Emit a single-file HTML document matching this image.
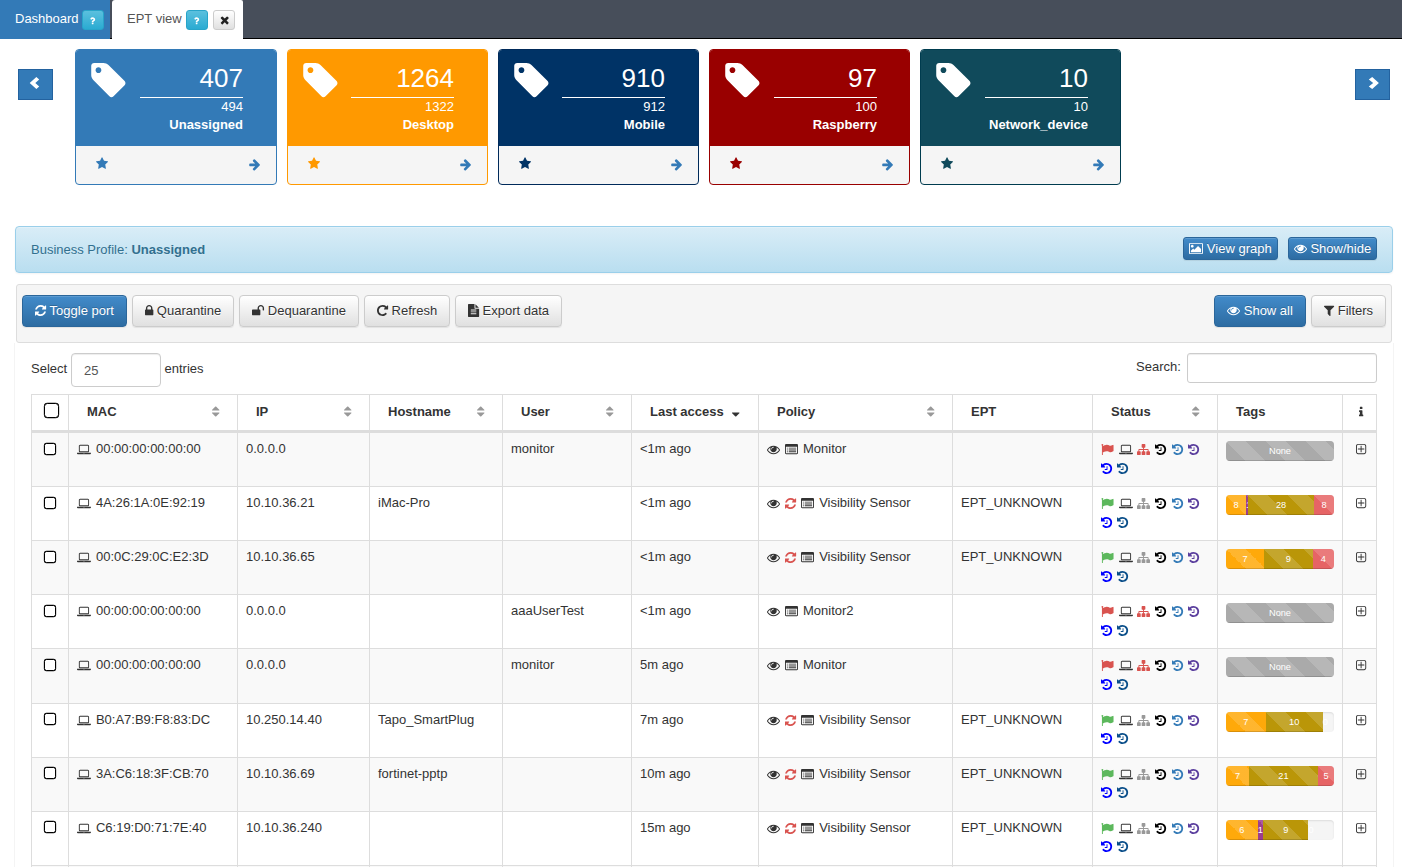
<!DOCTYPE html><html><head><meta charset="utf-8"><title>EPT view</title><style>
*{box-sizing:border-box}
html,body{margin:0;padding:0}
body{width:1402px;height:867px;overflow:hidden;background:#fff;font-family:"Liberation Sans",Arial,sans-serif;font-size:13px;line-height:1.42857;color:#333;position:relative}
svg.fa{display:inline-block;overflow:visible}
.abs{position:absolute}
#tabbar{position:absolute;left:0;top:0;width:1402px;height:39px;background:#474e5a;border-bottom:1px solid #000}
.tab{position:absolute;top:0;height:38px;font-size:13px;line-height:18px;white-space:nowrap}
#tab1{left:0;width:110px;background:#337ab7;color:#fff;height:39px}
#tab2{left:112px;width:131px;background:#fff;color:#555;height:39px;border-radius:3px 2px 0 0}
.tab .t{position:absolute;top:10px}
.xs{position:absolute;top:10px;height:20px;border-radius:3px;border:1px solid}
.xs.info{background:linear-gradient(#5bc0de,#2aabd2);border-color:#28a4c9}
.xs.def{background:linear-gradient(#fff,#e0e0e0);border-color:#ccc}
.nav{position:absolute;top:69px;width:35px;height:31px;background:#337ab7;border:1px solid #23629f}
.card{position:absolute;top:49px;height:136px;border:1px solid;border-radius:4px;background:#f5f5f5;overflow:hidden}
.card .hd{position:absolute;left:0;top:0;right:0;height:96px;color:#fff}
.card .big{position:absolute;right:var(--r);top:10px;font-size:26px;line-height:37px}
.card .hr{position:absolute;right:var(--r);width:103px;top:47px;height:1px;background:#fff}
.card .sm{position:absolute;right:var(--r);top:47.5px;line-height:18.57px}
.card .nm{position:absolute;right:var(--r);top:65.5px;line-height:18.57px;font-weight:bold;white-space:nowrap}
.card .star{position:absolute;left:20px;top:105px;line-height:18.57px}
.card .arr{position:absolute;right:15.8px;top:105.7px;line-height:18.57px}
#alert{position:absolute;left:15px;top:226px;width:1378px;height:47px;border:1px solid #9acfea;border-radius:4px;background:linear-gradient(#d9edf7,#b9def0);color:#31708f;text-shadow:0 1px 0 rgba(255,255,255,.2);box-shadow:inset 0 1px 0 rgba(255,255,255,.25),0 1px 2px rgba(0,0,0,.05)}
#alert .txt{position:absolute;left:15px;top:14px;line-height:18.57px}
.btn{position:absolute;border:1px solid;border-radius:4px;white-space:nowrap;text-align:center;font-size:13px}
.btn.p{background:linear-gradient(#428bca,#2d6ca2);border-color:#2b669a;color:#fff;text-shadow:0 -1px 0 rgba(0,0,0,.2);box-shadow:inset 0 1px 0 rgba(255,255,255,.15),0 1px 1px rgba(0,0,0,.075)}
.btn.d{background:linear-gradient(#fff,#e0e0e0);border-color:#ccc;color:#333;text-shadow:0 1px 0 #fff;box-shadow:inset 0 1px 0 rgba(255,255,255,.15),0 1px 1px rgba(0,0,0,.075)}
.btn.xsb{height:23px;line-height:21px;border-radius:3px}
.btn.md{height:32px;line-height:29px}
#well{position:absolute;left:16px;top:284px;width:1376px;height:59px;background:#f5f5f5;border:1px solid #ddd;border-radius:3px}
.inp{position:absolute;border:1px solid #ccc;border-radius:4px;background:#fff;box-shadow:inset 0 1px 1px rgba(0,0,0,.075)}
table{position:absolute;left:31px;top:394px;width:1346px;border-collapse:separate;border-spacing:0;table-layout:fixed}
th,td{border:0 solid #ddd;border-top-width:1px;border-left-width:1px;padding:8px;vertical-align:top;text-align:left;white-space:nowrap;overflow:hidden;line-height:18.5px}
th:last-child,td:last-child{border-right-width:1px}
th{font-weight:bold;padding:8px 18px;height:38px;border-bottom-width:2px;position:relative}
tbody tr{height:54px}
td{padding-top:7px}
tr.hi .cb{margin-top:2px}
tbody tr:nth-child(odd){background:#f9f9f9}
td.st{white-space:nowrap;padding-left:7.5px}
.l2{position:relative;top:1px}
tr.hi .l2{top:0}
td.st svg{margin-right:5px}
td svg{margin-right:5px}
td.c{text-align:center;padding-left:2.5px;padding-right:0}
td.k{padding:7px 8px 8px}th.k{padding:8px}
td.c svg{margin:0}
.cb{display:block;width:12px;height:12px;border:1px solid #000;border-radius:2.5px;background:#fff;margin:3px 0 0 4px;box-shadow:0 0 0 .15px #000}
th .cb{width:15px;height:15px;border-radius:3.5px;margin:0 0 0 4px}
.srt{position:absolute;right:18px;top:8px}
.pg{margin-top:1px;width:108px;height:20px;border-radius:4px;overflow:hidden;background:#f5f5f5;box-shadow:inset 0 1px 2px rgba(0,0,0,.1);white-space:nowrap;font-size:0}
.pg span{display:inline-block;height:20px;font-size:9.2px;line-height:20px;color:#fff;text-align:center;vertical-align:top;overflow:visible;white-space:nowrap;box-shadow:inset 0 -1px 0 rgba(0,0,0,.15);background-image:linear-gradient(45deg,rgba(255,255,255,.15) 25%,transparent 25%,transparent 50%,rgba(255,255,255,.15) 50%,rgba(255,255,255,.15) 75%,transparent 75%,transparent);background-size:40px 40px}
</style></head><body>
<div id="tabbar">
<div class="tab" id="tab1"><span class="t" style="left:15px">Dashboard</span><span class="xs info" style="left:82px;width:22px"><span class="abs" style="left:7.2px;top:4.6px;line-height:0"><svg class="fa" viewBox="46 0 1024 1792" style="width:5.43px;height:9.5px;vertical-align:-2.26px;fill:#fff;vertical-align:top"><path d="M704 1256v240q0 16-12 28t-28 12h-240q-16 0-28-12t-12-28v-240q0-16 12-28t28-12h240q16 0 28 12t12 28zM1020 656q0 54-15.500 101t-35 76.500-55 59.500-57.500 43.500-61 35.500q-41 23-68.500 65t-27.500 67q0 17-12 32.500t-28 15.500h-240q-15 0-25.500-18.500t-10.500-37.500v-45q0-83 65-156.500t143-108.500q59-27 84-56t25-76q0-42-46.500-74t-107.500-32q-65 0-108 29-35 25-107 115-13 16-31 16-12 0-25-8l-164-125q-13-10-15.500-25t5.500-28q160-266 464-266 80 0 161 31t146 83 106 127.500 41 158.500z"/></svg></span></span></div>
<div class="tab" id="tab2"><span class="t" style="left:15px">EPT view</span><span class="xs info" style="left:74px;width:22px"><span class="abs" style="left:7.2px;top:4.6px;line-height:0"><svg class="fa" viewBox="46 0 1024 1792" style="width:5.43px;height:9.5px;vertical-align:-2.26px;fill:#fff;vertical-align:top"><path d="M704 1256v240q0 16-12 28t-28 12h-240q-16 0-28-12t-12-28v-240q0-16 12-28t28-12h240q16 0 28 12t12 28zM1020 656q0 54-15.500 101t-35 76.500-55 59.500-57.500 43.500-61 35.500q-41 23-68.500 65t-27.500 67q0 17-12 32.500t-28 15.500h-240q-15 0-25.500-18.500t-10.500-37.500v-45q0-83 65-156.500t143-108.500q59-27 84-56t25-76q0-42-46.500-74t-107.500-32q-65 0-108 29-35 25-107 115-13 16-31 16-12 0-25-8l-164-125q-13-10-15.500-25t5.500-28q160-266 464-266 80 0 161 31t146 83 106 127.500 41 158.500z"/></svg></span></span><span class="xs def" style="left:101px;width:22px"><span class="abs" style="left:5.6px;top:2.5px;line-height:0"><svg class="fa" viewBox="192 0 1408 1792" style="width:9.43px;height:12px;vertical-align:-2.61px;fill:#222;vertical-align:top"><path d="M1490 1322q0 40-28 68l-136 136q-28 28-68 28t-68-28l-294-294-294 294q-28 28-68 28t-68-28l-136-136q-28-28-28-68t28-68l294-294-294-294q-28-28-28-68t28-68l136-136q28-28 68-28t68 28l294 294 294-294q28-28 68-28t68 28l136 136q28 28 28 68t-28 68l-294 294 294 294q28 28 28 68z"/></svg></span></span></div>
</div>
<div class="nav" style="left:18px"><svg class="abs" style="left:-1px;top:-1px" width="35" height="31" viewBox="18 69 35 31"><polygon fill="#fff" points="29.7,83 36.35,76.9 39.2,79.5 35.3,83 39.2,86.5 36.35,89.1"/></svg></div>
<div class="nav" style="left:1355px"><svg class="abs" style="left:-1px;top:-1px" width="35" height="31" viewBox="1355 69 35 31"><polygon fill="#fff" points="1378.9,83 1372.2,76.9 1368.8,79.6 1373.2,83 1368.8,86.6 1372.2,89.1"/></svg></div>
<div class="card" style="left:75px;width:202px;border-color:#337ab7;--r:33px">
<div class="hd" style="background:#337ab7"><span class="abs" style="left:15px;top:9.9px;line-height:0"><svg class="fa" viewBox="118 0 1536 1792" style="width:34.71px;height:40.5px;vertical-align:-6.69px;fill:#fff;vertical-align:top"><path d="M576 448q0-53-37.5-90.5t-90.5-37.5-90.5 37.5-37.5 90.5 37.5 90.5 90.5 37.5 90.5-37.5 37.5-90.5zM1643 1024q0 53-37 90l-491 492q-39 37-91 37-53 0-90-37l-715-716q-38-37-64.5-101t-26.5-117v-416q0-52 38-90t90-38h416q53 0 117 26.5t102 64.5l715 714q37 39 37 91z"/></svg></span>
<div class="big">407</div><div class="hr"></div><div class="sm">494</div><div class="nm">Unassigned</div></div>
<div class="star"><svg class="fa" viewBox="64 0 1664 1792" style="width:12.07px;height:13px;vertical-align:-1.86px;fill:#337ab7;"><path d="M1728 647q0 22-26 48l-363 354 86 500q1 7 1 20 0 21-10.5 35.5t-30.5 14.5q-19 0-40-12l-449-236-449 236q-22 12-40 12-21 0-31.5-14.5t-10.5-35.5q0-6 2-20l86-500-364-354q-25-27-25-48 0-37 56-46l502-73 225-455q19-41 49-41t49 41l225 455 502 73q56 9 56 46z"/></svg></div><div class="arr"><svg class="fa" viewBox="96 0 1536 1792" style="width:11.14px;height:13px;vertical-align:-1.86px;fill:#337ab7;"><path d="M1600 960q0 54-37 91l-651 651q-39 37-91 37-51 0-90-37l-75-75q-38-38-38-91t38-91l293-293h-704q-52 0-84.5-37.5t-32.5-90.5v-128q0-53 32.5-90.5t84.5-37.5h704l-293-294q-38-36-38-90t38-90l75-75q38-38 90-38 53 0 91 38l651 651q37 35 37 90z"/></svg></div></div>
<div class="card" style="left:287px;width:201px;border-color:#ff9900;--r:33px">
<div class="hd" style="background:#ff9900"><span class="abs" style="left:15px;top:9.9px;line-height:0"><svg class="fa" viewBox="118 0 1536 1792" style="width:34.71px;height:40.5px;vertical-align:-6.69px;fill:#fff;vertical-align:top"><path d="M576 448q0-53-37.5-90.5t-90.5-37.5-90.5 37.5-37.5 90.5 37.5 90.5 90.5 37.5 90.5-37.5 37.5-90.5zM1643 1024q0 53-37 90l-491 492q-39 37-91 37-53 0-90-37l-715-716q-38-37-64.5-101t-26.5-117v-416q0-52 38-90t90-38h416q53 0 117 26.5t102 64.5l715 714q37 39 37 91z"/></svg></span>
<div class="big">1264</div><div class="hr"></div><div class="sm">1322</div><div class="nm">Desktop</div></div>
<div class="star"><svg class="fa" viewBox="64 0 1664 1792" style="width:12.07px;height:13px;vertical-align:-1.86px;fill:#ff9900;"><path d="M1728 647q0 22-26 48l-363 354 86 500q1 7 1 20 0 21-10.5 35.5t-30.5 14.5q-19 0-40-12l-449-236-449 236q-22 12-40 12-21 0-31.5-14.5t-10.5-35.5q0-6 2-20l86-500-364-354q-25-27-25-48 0-37 56-46l502-73 225-455q19-41 49-41t49 41l225 455 502 73q56 9 56 46z"/></svg></div><div class="arr"><svg class="fa" viewBox="96 0 1536 1792" style="width:11.14px;height:13px;vertical-align:-1.86px;fill:#337ab7;"><path d="M1600 960q0 54-37 91l-651 651q-39 37-91 37-51 0-90-37l-75-75q-38-38-38-91t38-91l293-293h-704q-52 0-84.5-37.5t-32.5-90.5v-128q0-53 32.5-90.5t84.5-37.5h704l-293-294q-38-36-38-90t38-90l75-75q38-38 90-38 53 0 91 38l651 651q37 35 37 90z"/></svg></div></div>
<div class="card" style="left:498px;width:201px;border-color:#002a5a;--r:33px">
<div class="hd" style="background:#003366"><span class="abs" style="left:15px;top:9.9px;line-height:0"><svg class="fa" viewBox="118 0 1536 1792" style="width:34.71px;height:40.5px;vertical-align:-6.69px;fill:#fff;vertical-align:top"><path d="M576 448q0-53-37.5-90.5t-90.5-37.5-90.5 37.5-37.5 90.5 37.5 90.5 90.5 37.5 90.5-37.5 37.5-90.5zM1643 1024q0 53-37 90l-491 492q-39 37-91 37-53 0-90-37l-715-716q-38-37-64.5-101t-26.5-117v-416q0-52 38-90t90-38h416q53 0 117 26.5t102 64.5l715 714q37 39 37 91z"/></svg></span>
<div class="big">910</div><div class="hr"></div><div class="sm">912</div><div class="nm">Mobile</div></div>
<div class="star"><svg class="fa" viewBox="64 0 1664 1792" style="width:12.07px;height:13px;vertical-align:-1.86px;fill:#003366;"><path d="M1728 647q0 22-26 48l-363 354 86 500q1 7 1 20 0 21-10.5 35.5t-30.5 14.5q-19 0-40-12l-449-236-449 236q-22 12-40 12-21 0-31.5-14.5t-10.5-35.5q0-6 2-20l86-500-364-354q-25-27-25-48 0-37 56-46l502-73 225-455q19-41 49-41t49 41l225 455 502 73q56 9 56 46z"/></svg></div><div class="arr"><svg class="fa" viewBox="96 0 1536 1792" style="width:11.14px;height:13px;vertical-align:-1.86px;fill:#337ab7;"><path d="M1600 960q0 54-37 91l-651 651q-39 37-91 37-51 0-90-37l-75-75q-38-38-38-91t38-91l293-293h-704q-52 0-84.5-37.5t-32.5-90.5v-128q0-53 32.5-90.5t84.5-37.5h704l-293-294q-38-36-38-90t38-90l75-75q38-38 90-38 53 0 91 38l651 651q37 35 37 90z"/></svg></div></div>
<div class="card" style="left:709px;width:201px;border-color:#990000;--r:32px">
<div class="hd" style="background:#990000"><span class="abs" style="left:15px;top:9.9px;line-height:0"><svg class="fa" viewBox="118 0 1536 1792" style="width:34.71px;height:40.5px;vertical-align:-6.69px;fill:#fff;vertical-align:top"><path d="M576 448q0-53-37.5-90.5t-90.5-37.5-90.5 37.5-37.5 90.5 37.5 90.5 90.5 37.5 90.5-37.5 37.5-90.5zM1643 1024q0 53-37 90l-491 492q-39 37-91 37-53 0-90-37l-715-716q-38-37-64.5-101t-26.5-117v-416q0-52 38-90t90-38h416q53 0 117 26.5t102 64.5l715 714q37 39 37 91z"/></svg></span>
<div class="big">97</div><div class="hr"></div><div class="sm">100</div><div class="nm">Raspberry</div></div>
<div class="star"><svg class="fa" viewBox="64 0 1664 1792" style="width:12.07px;height:13px;vertical-align:-1.86px;fill:#990000;"><path d="M1728 647q0 22-26 48l-363 354 86 500q1 7 1 20 0 21-10.5 35.5t-30.5 14.5q-19 0-40-12l-449-236-449 236q-22 12-40 12-21 0-31.5-14.5t-10.5-35.5q0-6 2-20l86-500-364-354q-25-27-25-48 0-37 56-46l502-73 225-455q19-41 49-41t49 41l225 455 502 73q56 9 56 46z"/></svg></div><div class="arr"><svg class="fa" viewBox="96 0 1536 1792" style="width:11.14px;height:13px;vertical-align:-1.86px;fill:#337ab7;"><path d="M1600 960q0 54-37 91l-651 651q-39 37-91 37-51 0-90-37l-75-75q-38-38-38-91t38-91l293-293h-704q-52 0-84.5-37.5t-32.5-90.5v-128q0-53 32.5-90.5t84.5-37.5h704l-293-294q-38-36-38-90t38-90l75-75q38-38 90-38 53 0 91 38l651 651q37 35 37 90z"/></svg></div></div>
<div class="card" style="left:920px;width:201px;border-color:#003c4f;--r:32px">
<div class="hd" style="background:#104a5b"><span class="abs" style="left:15px;top:9.9px;line-height:0"><svg class="fa" viewBox="118 0 1536 1792" style="width:34.71px;height:40.5px;vertical-align:-6.69px;fill:#fff;vertical-align:top"><path d="M576 448q0-53-37.5-90.5t-90.5-37.5-90.5 37.5-37.5 90.5 37.5 90.5 90.5 37.5 90.5-37.5 37.5-90.5zM1643 1024q0 53-37 90l-491 492q-39 37-91 37-53 0-90-37l-715-716q-38-37-64.5-101t-26.5-117v-416q0-52 38-90t90-38h416q53 0 117 26.5t102 64.5l715 714q37 39 37 91z"/></svg></span>
<div class="big">10</div><div class="hr"></div><div class="sm">10</div><div class="nm">Network_device</div></div>
<div class="star"><svg class="fa" viewBox="64 0 1664 1792" style="width:12.07px;height:13px;vertical-align:-1.86px;fill:#104a5b;"><path d="M1728 647q0 22-26 48l-363 354 86 500q1 7 1 20 0 21-10.5 35.5t-30.5 14.5q-19 0-40-12l-449-236-449 236q-22 12-40 12-21 0-31.5-14.5t-10.5-35.5q0-6 2-20l86-500-364-354q-25-27-25-48 0-37 56-46l502-73 225-455q19-41 49-41t49 41l225 455 502 73q56 9 56 46z"/></svg></div><div class="arr"><svg class="fa" viewBox="96 0 1536 1792" style="width:11.14px;height:13px;vertical-align:-1.86px;fill:#337ab7;"><path d="M1600 960q0 54-37 91l-651 651q-39 37-91 37-51 0-90-37l-75-75q-38-38-38-91t38-91l293-293h-704q-52 0-84.5-37.5t-32.5-90.5v-128q0-53 32.5-90.5t84.5-37.5h704l-293-294q-38-36-38-90t38-90l75-75q38-38 90-38 53 0 91 38l651 651q37 35 37 90z"/></svg></div></div>
<div id="alert"><div class="txt">Business Profile: <b>Unassigned</b></div>
<div class="btn p xsb" style="left:1167px;top:10px;width:95px"><svg class="fa" viewBox="0 0 1920 1792" style="width:13.93px;height:13px;vertical-align:-2.26px;fill:#fff;"><path d="M640 576q0 80-56 136t-136 56-136-56-56-136 56-136 136-56 136 56 56 136zM1664 960v448h-1408v-192l320-320 160 160 512-512zM1760 256h-1600q-13 0-22.5 9.5t-9.5 22.5v1216q0 13 9.5 22.5t22.5 9.5h1600q13 0 22.5-9.5t9.5-22.5v-1216q0-13-9.5-22.5t-22.5-9.5zM1920 288v1216q0 66-47 113t-113 47h-1600q-66 0-113-47t-47-113v-1216q0-66 47-113t113-47h1600q66 0 113 47t47 113z"/></svg> View graph</div>
<div class="btn p xsb" style="left:1272px;top:10px;width:89px"><svg class="fa" viewBox="0 0 1792 1792" style="width:13.00px;height:13px;vertical-align:-2.26px;fill:#fff;"><path d="M1664 960q-152-236-381-353 61 104 61 225 0 185-131.5 316.5t-316.5 131.5-316.5-131.5-131.5-316.5q0-121 61-225-229 117-381 353 133 205 333.5 326.5t434.5 121.5 434.5-121.5 333.5-326.5zM944 576q0-20-14-34t-34-14q-125 0-214.5 89.5t-89.5 214.5q0 20 14 34t34 14 34-14 14-34q0-86 61-147t147-61q20 0 34-14t14-34zM1792 960q0 34-20 69-140 230-376.5 368.5t-499.5 138.5-499.5-139-376.500-368q-20-35-20-69t20-69q140-229 376.5-368t499.5-139 499.5 139 376.5 368q20 35 20 69z"/></svg> Show/hide</div></div>
<div id="well">
<div class="btn p md" style="left:5px;top:10px;width:105px"><svg class="fa" viewBox="128 0 1536 1792" style="width:11.14px;height:13px;vertical-align:-1.86px;fill:#fff;"><path d="M1639 1056q0 5-1 7-64 268-268 434.5t-478 166.5q-146 0-282.5-55t-243.5-157l-129 129q-19 19-45 19t-45-19-19-45v-448q0-26 19-45t45-19h448q26 0 45 19t19 45-19 45l-137 137q71 66 161 102t187 36q134 0 250-65t186-179q11-17 53-117 8-23 30-23h192q13 0 22.5 9.5t9.500 22.5zM1664 256v448q0 26-19 45t-45 19h-448q-26 0-45-19t-19-45 19-45l138-138q-148-137-349-137-134 0-250 65t-186 179q-11 17-53 117-8 23-30 23h-199q-13 0-22.5-9.5t-9.5-22.5v-7q65-268 270-434.5t480-166.5q146 0 284 55.5t245 156.5l130-129q19-19 45-19t45 19 19 45z"/></svg> Toggle port</div>
<div class="btn d md" style="left:115px;top:10px;width:102px"><svg class="fa" viewBox="320 0 1152 1792" style="width:8.36px;height:13px;vertical-align:-1.86px;fill:#333;"><path d="M640 768h512v-192q0-106-75-181t-181-75-181 75-75 181v192zM1472 864v576q0 40-28 68t-68 28h-960q-40 0-68-28t-28-68v-576q0-40 28-68t68-28h32v-192q0-184 132-316t316-132 316 132 132 316v192h32q40 0 68 28t28 68z"/></svg> Quarantine</div>
<div class="btn d md" style="left:222px;top:10px;width:120px"><svg class="fa" viewBox="64 0 1664 1792" style="width:12.07px;height:13px;vertical-align:-1.86px;fill:#333;"><path d="M1728 576v256q0 26-19 45t-45 19h-64q-26 0-45-19t-19-45v-256q0-106-75-181t-181-75-181 75-75 181v192h96q40 0 68 28t28 68v576q0 40-28 68t-68 28h-960q-40 0-68-28t-28-68v-576q0-40 28-68t68-28h672v-192q0-185 131.5-316.5t316.5-131.5 316.5 131.5 131.5 316.5z"/></svg> Dequarantine</div>
<div class="btn d md" style="left:347px;top:10px;width:86px"><svg class="fa" viewBox="128 0 1536 1792" style="width:11.14px;height:13px;vertical-align:-1.86px;fill:#333;"><path d="M1664 256v448q0 26-19 45t-45 19h-448q-42 0-59-40-17-39 14-69l138-138q-148-137-349-137-104 0-198.5 40.5t-163.5 109.5-109.5 163.5-40.5 198.5 40.5 198.5 109.5 163.5 163.5 109.5 198.5 40.5q119 0 225-52t179-147q7-10 23-12 15 0 25 9l137 138q9 8 9.500 20.5t-7.500 22.5q-109 132-264 204.5t-327 72.5q-156 0-298-61t-245-164-164-245-61-298 61-298 164-245 245-164 298-61q147 0 284.5 55.5t244.5 156.5l130-129q29-31 70-14 39 17 39 59z"/></svg> Refresh</div>
<div class="btn d md" style="left:438px;top:10px;width:107px"><svg class="fa" viewBox="128 0 1536 1792" style="width:11.14px;height:13px;vertical-align:-1.86px;fill:#333;"><path d="M1596 476q14 14 28 36h-472v-472q22 14 36 28zM1120 640h544v1056q0 40-28 68t-68 28h-1344q-40 0-68-28t-28-68v-1600q0-40 28-68t68-28h800v544q0 40 28 68t68 28zM1280 1376v-64q0-14-9-23t-23-9h-704q-14 0-23 9t-9 23v64q0 14 9 23t23 9h704q14 0 23-9t9-23zM1280 1120v-64q0-14-9-23t-23-9h-704q-14 0-23 9t-9 23v64q0 14 9 23t23 9h704q14 0 23-9t9-23zM1280 864v-64q0-14-9-23t-23-9h-704q-14 0-23 9t-9 23v64q0 14 9 23t23 9h704q14 0 23-9t9-23z"/></svg> Export data</div>
<div class="btn p md" style="left:1197px;top:10px;width:92px"><svg class="fa" viewBox="0 0 1792 1792" style="width:13.00px;height:13px;vertical-align:-1.86px;fill:#fff;"><path d="M1664 960q-152-236-381-353 61 104 61 225 0 185-131.5 316.5t-316.5 131.5-316.5-131.5-131.5-316.5q0-121 61-225-229 117-381 353 133 205 333.5 326.5t434.5 121.5 434.5-121.5 333.5-326.5zM944 576q0-20-14-34t-34-14q-125 0-214.5 89.5t-89.5 214.5q0 20 14 34t34 14 34-14 14-34q0-86 61-147t147-61q20 0 34-14t14-34zM1792 960q0 34-20 69-140 230-376.5 368.5t-499.5 138.5-499.5-139-376.500-368q-20-35-20-69t20-69q140-229 376.5-368t499.5-139 499.5 139 376.5 368q20 35 20 69z"/></svg> Show all</div>
<div class="btn d md" style="left:1294px;top:10px;width:75px"><svg class="fa" viewBox="192 0 1408 1792" style="width:10.21px;height:13px;vertical-align:-1.86px;fill:#333;"><path d="M1595 295q17 41-14 70l-493 493v742q0 42-39 59-13 5-25 5-27 0-45-19l-256-256q-19-19-19-45v-486l-493-493q-31-29-14-70 17-39 59-39h1280q42 0 59 39z"/></svg> Filters</div>
</div>
<div class="abs" style="left:14px;top:343px;width:1px;height:524px;background:#f4f4f4"></div>
<div class="abs" style="left:1393px;top:343px;width:1px;height:524px;background:#f4f4f4"></div>
<div class="abs" style="left:31px;top:360px;line-height:18.57px">Select</div>
<div class="inp" style="left:71px;top:353px;width:90px;height:34px"><span class="abs" style="left:12px;top:8px;line-height:18.57px;color:#555">25</span></div>
<div class="abs" style="left:164.5px;top:360px;line-height:18.57px">entries</div>
<div class="abs" style="left:1136px;top:358px;line-height:18.57px">Search:</div>
<div class="inp" style="left:1187px;top:353px;width:190px;height:30px;border-radius:3px"></div>
<table><colgroup><col style="width:37px"><col style="width:169px"><col style="width:132px"><col style="width:133px"><col style="width:129px"><col style="width:127px"><col style="width:194px"><col style="width:140px"><col style="width:125px"><col style="width:125px"><col style="width:35px"></colgroup>
<thead><tr><th class="k"><span class="cb"></span></th><th>MAC<span class="srt"><svg class="fa" viewBox="0 0 1024 1792" style="width:7.43px;height:13px;vertical-align:-1.86px;fill:#999;"><path d="M1024 1088q0 26-19 45l-448 448q-19 19-45 19t-45-19l-448-448q-19-19-19-45t19-45 45-19h896q26 0 45 19t19 45zM1024 704q0 26-19 45t-45 19h-896q-26 0-45-19t-19-45 19-45l448-448q19-19 45-19t45 19l448 448q19 19 19 45z"/></svg></span></th><th>IP<span class="srt"><svg class="fa" viewBox="0 0 1024 1792" style="width:7.43px;height:13px;vertical-align:-1.86px;fill:#999;"><path d="M1024 1088q0 26-19 45l-448 448q-19 19-45 19t-45-19l-448-448q-19-19-19-45t19-45 45-19h896q26 0 45 19t19 45zM1024 704q0 26-19 45t-45 19h-896q-26 0-45-19t-19-45 19-45l448-448q19-19 45-19t45 19l448 448q19 19 19 45z"/></svg></span></th><th>Hostname<span class="srt"><svg class="fa" viewBox="0 0 1024 1792" style="width:7.43px;height:13px;vertical-align:-1.86px;fill:#999;"><path d="M1024 1088q0 26-19 45l-448 448q-19 19-45 19t-45-19l-448-448q-19-19-19-45t19-45 45-19h896q26 0 45 19t19 45zM1024 704q0 26-19 45t-45 19h-896q-26 0-45-19t-19-45 19-45l448-448q19-19 45-19t45 19l448 448q19 19 19 45z"/></svg></span></th><th>User<span class="srt"><svg class="fa" viewBox="0 0 1024 1792" style="width:7.43px;height:13px;vertical-align:-1.86px;fill:#999;"><path d="M1024 1088q0 26-19 45l-448 448q-19 19-45 19t-45-19l-448-448q-19-19-19-45t19-45 45-19h896q26 0 45 19t19 45zM1024 704q0 26-19 45t-45 19h-896q-26 0-45-19t-19-45 19-45l448-448q19-19 45-19t45 19l448 448q19 19 19 45z"/></svg></span></th><th>Last access <span style="margin-left:5px"><svg class="fa" viewBox="0 0 1024 1792" style="width:7.43px;height:13px;vertical-align:-1.86px;fill:#333;"><path d="M1024 1088q0 26-19 45l-448 448q-19 19-45 19t-45-19l-448-448q-19-19-19-45t19-45 45-19h896q26 0 45 19t19 45z"/></svg></span></th><th>Policy<span class="srt"><svg class="fa" viewBox="0 0 1024 1792" style="width:7.43px;height:13px;vertical-align:-1.86px;fill:#999;"><path d="M1024 1088q0 26-19 45l-448 448q-19 19-45 19t-45-19l-448-448q-19-19-19-45t19-45 45-19h896q26 0 45 19t19 45zM1024 704q0 26-19 45t-45 19h-896q-26 0-45-19t-19-45 19-45l448-448q19-19 45-19t45 19l448 448q19 19 19 45z"/></svg></span></th><th>EPT</th><th>Status<span class="srt"><svg class="fa" viewBox="0 0 1024 1792" style="width:7.43px;height:13px;vertical-align:-1.86px;fill:#999;"><path d="M1024 1088q0 26-19 45l-448 448q-19 19-45 19t-45-19l-448-448q-19-19-19-45t19-45 45-19h896q26 0 45 19t19 45zM1024 704q0 26-19 45t-45 19h-896q-26 0-45-19t-19-45 19-45l448-448q19-19 45-19t45 19l448 448q19 19 19 45z"/></svg></span></th><th>Tags</th><th style="padding:8px 0 8px 4px;text-align:center"><svg class="fa" viewBox="0 0 640 1792" style="width:4.29px;height:12px;vertical-align:-1.71px;fill:#333;"><path d="M640 1344v128q0 26-19 45t-45 19h-512q-26 0-45-19t-19-45v-128q0-26 19-45t45-19h64v-384h-64q-26 0-45-19t-19-45v-128q0-26 19-45t45-19h384q26 0 45 19t19 45v576h64q26 0 45 19t19 45zM512 192v192q0 26-19 45t-45 19h-256q-26 0-45-19t-19-45v-192q0-26 19-45t45-19h256q26 0 45 19t19 45z"/></svg></th></tr></thead>
<tbody>
<tr><td class="k"><span class="cb"></span></td><td><svg class="fa" viewBox="0 0 1920 1792" style="width:13.93px;height:13px;vertical-align:-2.76px;fill:#333;"><path d="M416 1280q-66 0-113-47t-47-113v-704q0-66 47-113t113-47h1088q66 0 113 47t47 113v704q0 66-47 113t-113 47h-1088zM384 416v704q0 13 9.5 22.5t22.5 9.5h1088q13 0 22.5-9.5t9.500-22.5v-704q0-13-9.500-22.5t-22.5-9.5h-1088q-13 0-22.5 9.5t-9.500 22.5zM1760 1344h160v96q0 40-47 68t-113 28h-1600q-66 0-113-28t-47-68v-96h1760zM1040 1440q16 0 16-16t-16-16h-160q-16 0-16 16t16 16h160z"/></svg>00:00:00:00:00:00</td><td>0.0.0.0</td><td></td><td>monitor</td><td>&lt;1m ago</td><td><svg class="fa" viewBox="0 0 1792 1792" style="width:13.00px;height:13px;vertical-align:-2.76px;fill:#333;"><path d="M1664 960q-152-236-381-353 61 104 61 225 0 185-131.5 316.5t-316.5 131.5-316.5-131.5-131.5-316.5q0-121 61-225-229 117-381 353 133 205 333.5 326.5t434.5 121.5 434.5-121.5 333.5-326.5zM944 576q0-20-14-34t-34-14q-125 0-214.5 89.5t-89.5 214.5q0 20 14 34t34 14 34-14 14-34q0-86 61-147t147-61q20 0 34-14t14-34zM1792 960q0 34-20 69-140 230-376.5 368.5t-499.5 138.5-499.5-139-376.500-368q-20-35-20-69t20-69q140-229 376.5-368t499.5-139 499.5 139 376.5 368q20 35 20 69z"/></svg><svg class="fa" viewBox="0 0 1792 1792" style="width:13.00px;height:13px;vertical-align:-2.76px;fill:#333;"><path d="M384 1184v64q0 13-9.500 22.500t-22.500 9.500h-64q-13 0-22.500-9.500t-9.500-22.500v-64q0-13 9.500-22.500t22.500-9.500h64q13 0 22.500 9.500t9.500 22.500zM384 928v64q0 13-9.500 22.500t-22.500 9.500h-64q-13 0-22.500-9.500t-9.500-22.500v-64q0-13 9.500-22.500t22.500-9.500h64q13 0 22.500 9.500t9.500 22.500zM384 672v64q0 13-9.500 22.500t-22.500 9.500h-64q-13 0-22.500-9.500t-9.500-22.500v-64q0-13 9.500-22.500t22.500-9.500h64q13 0 22.500 9.500t9.500 22.500zM1536 1184v64q0 13-9.500 22.500t-22.500 9.500h-960q-13 0-22.500-9.500t-9.500-22.500v-64q0-13 9.500-22.500t22.500-9.500h960q13 0 22.500 9.500t9.500 22.500zM1536 928v64q0 13-9.500 22.500t-22.500 9.500h-960q-13 0-22.500-9.500t-9.500-22.500v-64q0-13 9.500-22.500t22.500-9.500h960q13 0 22.500 9.500t9.500 22.500zM1536 672v64q0 13-9.500 22.500t-22.500 9.500h-960q-13 0-22.500-9.500t-9.500-22.500v-64q0-13 9.500-22.500t22.500-9.500h960q13 0 22.500 9.500t9.500 22.500zM1664 1376v-832q0-13-9.500-22.500t-22.500-9.500h-1472q-13 0-22.500 9.500t-9.500 22.500v832q0 13 9.500 22.500t22.500 9.500h1472q13 0 22.500-9.500t9.500-22.500zM1792 288v1088q0 66-47 113t-113 47h-1472q-66 0-113-47t-47-113v-1088q0-66 47-113t113-47h1472q66 0 113 47t47 113z"/></svg>Monitor</td><td></td><td class="st"><svg class="fa" viewBox="0 0 1792 1792" style="width:13.00px;height:13px;vertical-align:-2.76px;fill:#d9534f;"><path d="M1728 320v763q0 39-35 57-10 5-17 9-218 116-369 116-88 0-158-35l-28-14q-64-33-99-48t-91-29-114-14q-102 0-235.5 44t-228.5 102q-15 9-33 9-16 0-32-8-32-19-32-56v-742q0-35 31-55 35-21 78.500-42.5t114-52 152.500-49.5 155-19q112 0 209 31t209 86q38 19 89 19 122 0 310-112 22-12 31-17 31-16 62 2 31 20 31 55zM320 256q0 35-17.5 64t-46.5 46v1266q0 14-9 23t-23 9h-64q-14 0-23-9t-9-23v-1266q-29-17-46.5-46t-17.5-64q0-53 37.5-90.500t90.500-37.5 90.500 37.5 37.500 90.500z"/></svg><svg class="fa" viewBox="0 0 1920 1792" style="width:13.93px;height:13px;vertical-align:-2.76px;fill:#333;"><path d="M416 1280q-66 0-113-47t-47-113v-704q0-66 47-113t113-47h1088q66 0 113 47t47 113v704q0 66-47 113t-113 47h-1088zM384 416v704q0 13 9.5 22.5t22.5 9.5h1088q13 0 22.5-9.5t9.500-22.5v-704q0-13-9.500-22.5t-22.5-9.5h-1088q-13 0-22.5 9.5t-9.500 22.5zM1760 1344h160v96q0 40-47 68t-113 28h-1600q-66 0-113-28t-47-68v-96h1760zM1040 1440q16 0 16-16t-16-16h-160q-16 0-16 16t16 16h160z"/></svg><svg class="fa" viewBox="0 0 1792 1792" style="width:13.00px;height:13px;vertical-align:-2.76px;fill:#d9534f;"><path d="M1792 1248v320q0 40-28 68t-68 28h-320q-40 0-68-28t-28-68v-320q0-40 28-68t68-28h96v-192h-512v192h96q40 0 68 28t28 68v320q0 40-28 68t-68 28h-320q-40 0-68-28t-28-68v-320q0-40 28-68t68-28h96v-192h-512v192h96q40 0 68 28t28 68v320q0 40-28 68t-68 28h-320q-40 0-68-28t-28-68v-320q0-40 28-68t68-28h96v-192q0-52 38-90t90-38h512v-192h-96q-40 0-68-28t-28-68v-320q0-40 28-68t68-28h320q40 0 68 28t28 68v320q0 40-28 68t-68 28h-96v192h512q52 0 90 38t38 90v192h96q40 0 68 28t28 68z"/></svg><svg class="fa" viewBox="0 0 1536 1792" style="width:11.14px;height:13px;vertical-align:-2.76px;fill:#000;"><path d="M1536 896q0 156-61 298t-164 245-245 164-298 61q-172 0-327-72.5t-264-204.5q-7-10-6.500-22.5t8.500-20.5l137-138q10-9 25-9 16 2 23 12 73 95 179 147t225 52q104 0 198.5-40.5t163.500-109.5 109.500-163.5 40.500-198.5-40.500-198.5-109.500-163.5-163.500-109.5-198.5-40.5q-98 0-188 35.5t-160 101.5l137 138q31 30 14 69-17 40-59 40h-448q-26 0-45-19t-19-45v-448q0-42 40-59 39-17 69 14l130 129q107-101 244.5-156.5t284.500-55.5q156 0 298 61t245 164 164 245 61 298zM896 608v448q0 14-9 23t-23 9h-320q-14 0-23-9t-9-23v-64q0-14 9-23t23-9h224v-352q0-14 9-23t23-9h64q14 0 23 9t9 23z"/></svg><svg class="fa" viewBox="0 0 1536 1792" style="width:11.14px;height:13px;vertical-align:-2.76px;fill:#337ab7;"><path d="M1536 896q0 156-61 298t-164 245-245 164-298 61q-172 0-327-72.5t-264-204.5q-7-10-6.500-22.5t8.500-20.5l137-138q10-9 25-9 16 2 23 12 73 95 179 147t225 52q104 0 198.5-40.5t163.500-109.5 109.500-163.5 40.500-198.5-40.500-198.5-109.500-163.5-163.500-109.5-198.5-40.5q-98 0-188 35.5t-160 101.5l137 138q31 30 14 69-17 40-59 40h-448q-26 0-45-19t-19-45v-448q0-42 40-59 39-17 69 14l130 129q107-101 244.5-156.5t284.500-55.5q156 0 298 61t245 164 164 245 61 298zM896 608v448q0 14-9 23t-23 9h-320q-14 0-23-9t-9-23v-64q0-14 9-23t23-9h224v-352q0-14 9-23t23-9h64q14 0 23 9t9 23z"/></svg><svg class="fa" viewBox="0 0 1536 1792" style="width:11.14px;height:13px;vertical-align:-2.76px;fill:#5b3f9e;"><path d="M1536 896q0 156-61 298t-164 245-245 164-298 61q-172 0-327-72.5t-264-204.5q-7-10-6.500-22.5t8.500-20.5l137-138q10-9 25-9 16 2 23 12 73 95 179 147t225 52q104 0 198.5-40.5t163.500-109.5 109.500-163.5 40.500-198.5-40.500-198.5-109.500-163.5-163.500-109.5-198.5-40.5q-98 0-188 35.5t-160 101.5l137 138q31 30 14 69-17 40-59 40h-448q-26 0-45-19t-19-45v-448q0-42 40-59 39-17 69 14l130 129q107-101 244.5-156.5t284.500-55.5q156 0 298 61t245 164 164 245 61 298zM896 608v448q0 14-9 23t-23 9h-320q-14 0-23-9t-9-23v-64q0-14 9-23t23-9h224v-352q0-14 9-23t23-9h64q14 0 23 9t9 23z"/></svg><br><span class="l2"><svg class="fa" viewBox="0 0 1536 1792" style="width:11.14px;height:13px;vertical-align:-2.76px;fill:#0000ff;"><path d="M1536 896q0 156-61 298t-164 245-245 164-298 61q-172 0-327-72.5t-264-204.5q-7-10-6.500-22.5t8.500-20.5l137-138q10-9 25-9 16 2 23 12 73 95 179 147t225 52q104 0 198.5-40.5t163.500-109.5 109.500-163.5 40.500-198.5-40.500-198.5-109.500-163.5-163.500-109.5-198.5-40.5q-98 0-188 35.5t-160 101.5l137 138q31 30 14 69-17 40-59 40h-448q-26 0-45-19t-19-45v-448q0-42 40-59 39-17 69 14l130 129q107-101 244.5-156.5t284.500-55.5q156 0 298 61t245 164 164 245 61 298zM896 608v448q0 14-9 23t-23 9h-320q-14 0-23-9t-9-23v-64q0-14 9-23t23-9h224v-352q0-14 9-23t23-9h64q14 0 23 9t9 23z"/></svg><svg class="fa" viewBox="0 0 1536 1792" style="width:11.14px;height:13px;vertical-align:-2.76px;fill:#0b4f8a;"><path d="M1536 896q0 156-61 298t-164 245-245 164-298 61q-172 0-327-72.5t-264-204.5q-7-10-6.500-22.5t8.500-20.5l137-138q10-9 25-9 16 2 23 12 73 95 179 147t225 52q104 0 198.5-40.5t163.500-109.5 109.500-163.5 40.500-198.5-40.500-198.5-109.500-163.5-163.500-109.5-198.5-40.5q-98 0-188 35.5t-160 101.5l137 138q31 30 14 69-17 40-59 40h-448q-26 0-45-19t-19-45v-448q0-42 40-59 39-17 69 14l130 129q107-101 244.5-156.5t284.500-55.5q156 0 298 61t245 164 164 245 61 298zM896 608v448q0 14-9 23t-23 9h-320q-14 0-23-9t-9-23v-64q0-14 9-23t23-9h224v-352q0-14 9-23t23-9h64q14 0 23 9t9 23z"/></svg></span></td><td><div class="pg"><span style="width:108px;background-color:#aaa">None</span></div></td><td class="c"><svg class="fa" viewBox="0 0 1408 1792" style="width:10.21px;height:13px;vertical-align:-2.76px;fill:#333;"><path d="M1152 800v64q0 14-9 23t-23 9h-352v352q0 14-9 23t-23 9h-64q-14 0-23-9t-9-23v-352h-352q-14 0-23-9t-9-23v-64q0-14 9-23t23-9h352v-352q0-14 9-23t23-9h64q14 0 23 9t9 23v352h352q14 0 23 9t9 23zM1280 1248v-832q0-66-47-113t-113-47h-832q-66 0-113 47t-47 113v832q0 66 47 113t113 47h832q66 0 113-47t47-113zM1408 416v832q0 119-84.500 203.500t-203.500 84.500h-832q-119 0-203.500-84.500t-84.500-203.500v-832q0-119 84.500-203.500t203.500-84.500h832q119 0 203.500 84.500t84.500 203.500z"/></svg></td></tr><tr><td class="k"><span class="cb"></span></td><td><svg class="fa" viewBox="0 0 1920 1792" style="width:13.93px;height:13px;vertical-align:-2.76px;fill:#333;"><path d="M416 1280q-66 0-113-47t-47-113v-704q0-66 47-113t113-47h1088q66 0 113 47t47 113v704q0 66-47 113t-113 47h-1088zM384 416v704q0 13 9.5 22.5t22.5 9.5h1088q13 0 22.5-9.5t9.500-22.5v-704q0-13-9.500-22.5t-22.5-9.5h-1088q-13 0-22.5 9.5t-9.500 22.5zM1760 1344h160v96q0 40-47 68t-113 28h-1600q-66 0-113-28t-47-68v-96h1760zM1040 1440q16 0 16-16t-16-16h-160q-16 0-16 16t16 16h160z"/></svg>4A:26:1A:0E:92:19</td><td>10.10.36.21</td><td>iMac-Pro</td><td></td><td>&lt;1m ago</td><td><svg class="fa" viewBox="0 0 1792 1792" style="width:13.00px;height:13px;vertical-align:-2.76px;fill:#333;"><path d="M1664 960q-152-236-381-353 61 104 61 225 0 185-131.5 316.5t-316.5 131.5-316.5-131.5-131.5-316.5q0-121 61-225-229 117-381 353 133 205 333.5 326.5t434.5 121.5 434.5-121.5 333.5-326.5zM944 576q0-20-14-34t-34-14q-125 0-214.5 89.5t-89.5 214.5q0 20 14 34t34 14 34-14 14-34q0-86 61-147t147-61q20 0 34-14t14-34zM1792 960q0 34-20 69-140 230-376.5 368.5t-499.5 138.5-499.5-139-376.500-368q-20-35-20-69t20-69q140-229 376.5-368t499.5-139 499.5 139 376.5 368q20 35 20 69z"/></svg><svg class="fa" viewBox="128 0 1536 1792" style="width:11.14px;height:13px;vertical-align:-2.76px;fill:#d9534f;"><path d="M1639 1056q0 5-1 7-64 268-268 434.5t-478 166.5q-146 0-282.5-55t-243.5-157l-129 129q-19 19-45 19t-45-19-19-45v-448q0-26 19-45t45-19h448q26 0 45 19t19 45-19 45l-137 137q71 66 161 102t187 36q134 0 250-65t186-179q11-17 53-117 8-23 30-23h192q13 0 22.5 9.5t9.500 22.5zM1664 256v448q0 26-19 45t-45 19h-448q-26 0-45-19t-19-45 19-45l138-138q-148-137-349-137-134 0-250 65t-186 179q-11 17-53 117-8 23-30 23h-199q-13 0-22.5-9.5t-9.5-22.5v-7q65-268 270-434.5t480-166.5q146 0 284 55.5t245 156.5l130-129q19-19 45-19t45 19 19 45z"/></svg><svg class="fa" viewBox="0 0 1792 1792" style="width:13.00px;height:13px;vertical-align:-2.76px;fill:#333;"><path d="M384 1184v64q0 13-9.500 22.500t-22.500 9.500h-64q-13 0-22.500-9.500t-9.500-22.500v-64q0-13 9.500-22.500t22.500-9.500h64q13 0 22.500 9.500t9.500 22.500zM384 928v64q0 13-9.500 22.500t-22.500 9.500h-64q-13 0-22.500-9.500t-9.500-22.500v-64q0-13 9.500-22.500t22.500-9.500h64q13 0 22.500 9.500t9.500 22.500zM384 672v64q0 13-9.500 22.500t-22.500 9.500h-64q-13 0-22.500-9.500t-9.500-22.500v-64q0-13 9.500-22.500t22.500-9.500h64q13 0 22.500 9.500t9.500 22.500zM1536 1184v64q0 13-9.500 22.500t-22.500 9.500h-960q-13 0-22.500-9.500t-9.500-22.500v-64q0-13 9.500-22.500t22.500-9.500h960q13 0 22.500 9.500t9.500 22.500zM1536 928v64q0 13-9.500 22.500t-22.500 9.500h-960q-13 0-22.500-9.500t-9.500-22.500v-64q0-13 9.500-22.500t22.500-9.500h960q13 0 22.500 9.500t9.500 22.500zM1536 672v64q0 13-9.500 22.500t-22.500 9.500h-960q-13 0-22.500-9.500t-9.500-22.500v-64q0-13 9.500-22.500t22.500-9.500h960q13 0 22.500 9.500t9.500 22.500zM1664 1376v-832q0-13-9.500-22.500t-22.500-9.500h-1472q-13 0-22.500 9.500t-9.500 22.500v832q0 13 9.500 22.500t22.500 9.500h1472q13 0 22.500-9.500t9.500-22.500zM1792 288v1088q0 66-47 113t-113 47h-1472q-66 0-113-47t-47-113v-1088q0-66 47-113t113-47h1472q66 0 113 47t47 113z"/></svg>Visibility Sensor</td><td>EPT_UNKNOWN</td><td class="st"><svg class="fa" viewBox="0 0 1792 1792" style="width:13.00px;height:13px;vertical-align:-2.76px;fill:#5cb85c;"><path d="M1728 320v763q0 39-35 57-10 5-17 9-218 116-369 116-88 0-158-35l-28-14q-64-33-99-48t-91-29-114-14q-102 0-235.5 44t-228.5 102q-15 9-33 9-16 0-32-8-32-19-32-56v-742q0-35 31-55 35-21 78.500-42.5t114-52 152.500-49.5 155-19q112 0 209 31t209 86q38 19 89 19 122 0 310-112 22-12 31-17 31-16 62 2 31 20 31 55zM320 256q0 35-17.5 64t-46.5 46v1266q0 14-9 23t-23 9h-64q-14 0-23-9t-9-23v-1266q-29-17-46.5-46t-17.5-64q0-53 37.5-90.500t90.500-37.5 90.500 37.5 37.500 90.500z"/></svg><svg class="fa" viewBox="0 0 1920 1792" style="width:13.93px;height:13px;vertical-align:-2.76px;fill:#333;"><path d="M416 1280q-66 0-113-47t-47-113v-704q0-66 47-113t113-47h1088q66 0 113 47t47 113v704q0 66-47 113t-113 47h-1088zM384 416v704q0 13 9.5 22.5t22.5 9.5h1088q13 0 22.5-9.5t9.500-22.5v-704q0-13-9.500-22.5t-22.5-9.5h-1088q-13 0-22.5 9.5t-9.500 22.5zM1760 1344h160v96q0 40-47 68t-113 28h-1600q-66 0-113-28t-47-68v-96h1760zM1040 1440q16 0 16-16t-16-16h-160q-16 0-16 16t16 16h160z"/></svg><svg class="fa" viewBox="0 0 1792 1792" style="width:13.00px;height:13px;vertical-align:-2.76px;fill:#999;"><path d="M1792 1248v320q0 40-28 68t-68 28h-320q-40 0-68-28t-28-68v-320q0-40 28-68t68-28h96v-192h-512v192h96q40 0 68 28t28 68v320q0 40-28 68t-68 28h-320q-40 0-68-28t-28-68v-320q0-40 28-68t68-28h96v-192h-512v192h96q40 0 68 28t28 68v320q0 40-28 68t-68 28h-320q-40 0-68-28t-28-68v-320q0-40 28-68t68-28h96v-192q0-52 38-90t90-38h512v-192h-96q-40 0-68-28t-28-68v-320q0-40 28-68t68-28h320q40 0 68 28t28 68v320q0 40-28 68t-68 28h-96v192h512q52 0 90 38t38 90v192h96q40 0 68 28t28 68z"/></svg><svg class="fa" viewBox="0 0 1536 1792" style="width:11.14px;height:13px;vertical-align:-2.76px;fill:#000;"><path d="M1536 896q0 156-61 298t-164 245-245 164-298 61q-172 0-327-72.5t-264-204.5q-7-10-6.500-22.5t8.500-20.5l137-138q10-9 25-9 16 2 23 12 73 95 179 147t225 52q104 0 198.5-40.5t163.500-109.5 109.500-163.5 40.500-198.5-40.500-198.5-109.500-163.5-163.500-109.5-198.5-40.5q-98 0-188 35.5t-160 101.5l137 138q31 30 14 69-17 40-59 40h-448q-26 0-45-19t-19-45v-448q0-42 40-59 39-17 69 14l130 129q107-101 244.5-156.5t284.500-55.5q156 0 298 61t245 164 164 245 61 298zM896 608v448q0 14-9 23t-23 9h-320q-14 0-23-9t-9-23v-64q0-14 9-23t23-9h224v-352q0-14 9-23t23-9h64q14 0 23 9t9 23z"/></svg><svg class="fa" viewBox="0 0 1536 1792" style="width:11.14px;height:13px;vertical-align:-2.76px;fill:#337ab7;"><path d="M1536 896q0 156-61 298t-164 245-245 164-298 61q-172 0-327-72.5t-264-204.5q-7-10-6.500-22.5t8.500-20.5l137-138q10-9 25-9 16 2 23 12 73 95 179 147t225 52q104 0 198.5-40.5t163.500-109.5 109.500-163.5 40.500-198.5-40.500-198.5-109.500-163.5-163.500-109.5-198.5-40.5q-98 0-188 35.5t-160 101.5l137 138q31 30 14 69-17 40-59 40h-448q-26 0-45-19t-19-45v-448q0-42 40-59 39-17 69 14l130 129q107-101 244.5-156.5t284.500-55.5q156 0 298 61t245 164 164 245 61 298zM896 608v448q0 14-9 23t-23 9h-320q-14 0-23-9t-9-23v-64q0-14 9-23t23-9h224v-352q0-14 9-23t23-9h64q14 0 23 9t9 23z"/></svg><svg class="fa" viewBox="0 0 1536 1792" style="width:11.14px;height:13px;vertical-align:-2.76px;fill:#5b3f9e;"><path d="M1536 896q0 156-61 298t-164 245-245 164-298 61q-172 0-327-72.5t-264-204.5q-7-10-6.500-22.5t8.500-20.5l137-138q10-9 25-9 16 2 23 12 73 95 179 147t225 52q104 0 198.5-40.5t163.500-109.5 109.500-163.5 40.500-198.5-40.500-198.5-109.500-163.5-163.500-109.5-198.5-40.5q-98 0-188 35.5t-160 101.5l137 138q31 30 14 69-17 40-59 40h-448q-26 0-45-19t-19-45v-448q0-42 40-59 39-17 69 14l130 129q107-101 244.5-156.5t284.500-55.5q156 0 298 61t245 164 164 245 61 298zM896 608v448q0 14-9 23t-23 9h-320q-14 0-23-9t-9-23v-64q0-14 9-23t23-9h224v-352q0-14 9-23t23-9h64q14 0 23 9t9 23z"/></svg><br><span class="l2"><svg class="fa" viewBox="0 0 1536 1792" style="width:11.14px;height:13px;vertical-align:-2.76px;fill:#0000ff;"><path d="M1536 896q0 156-61 298t-164 245-245 164-298 61q-172 0-327-72.5t-264-204.5q-7-10-6.500-22.5t8.500-20.5l137-138q10-9 25-9 16 2 23 12 73 95 179 147t225 52q104 0 198.5-40.5t163.500-109.5 109.500-163.5 40.500-198.5-40.500-198.5-109.500-163.5-163.500-109.5-198.5-40.5q-98 0-188 35.5t-160 101.5l137 138q31 30 14 69-17 40-59 40h-448q-26 0-45-19t-19-45v-448q0-42 40-59 39-17 69 14l130 129q107-101 244.5-156.5t284.500-55.5q156 0 298 61t245 164 164 245 61 298zM896 608v448q0 14-9 23t-23 9h-320q-14 0-23-9t-9-23v-64q0-14 9-23t23-9h224v-352q0-14 9-23t23-9h64q14 0 23 9t9 23z"/></svg><svg class="fa" viewBox="0 0 1536 1792" style="width:11.14px;height:13px;vertical-align:-2.76px;fill:#0b4f8a;"><path d="M1536 896q0 156-61 298t-164 245-245 164-298 61q-172 0-327-72.5t-264-204.5q-7-10-6.500-22.5t8.500-20.5l137-138q10-9 25-9 16 2 23 12 73 95 179 147t225 52q104 0 198.5-40.5t163.500-109.5 109.500-163.5 40.500-198.5-40.500-198.5-109.500-163.5-163.500-109.5-198.5-40.5q-98 0-188 35.5t-160 101.5l137 138q31 30 14 69-17 40-59 40h-448q-26 0-45-19t-19-45v-448q0-42 40-59 39-17 69 14l130 129q107-101 244.5-156.5t284.500-55.5q156 0 298 61t245 164 164 245 61 298zM896 608v448q0 14-9 23t-23 9h-320q-14 0-23-9t-9-23v-64q0-14 9-23t23-9h224v-352q0-14 9-23t23-9h64q14 0 23 9t9 23z"/></svg></span></td><td><div class="pg"><span style="width:20px;background-color:#ffa90a">8</span><span style="width:2px;background-color:#9c3e8e">1</span><span style="width:66px;background-color:#ba9608">28</span><span style="width:20px;background-color:#e66465">8</span></div></td><td class="c"><svg class="fa" viewBox="0 0 1408 1792" style="width:10.21px;height:13px;vertical-align:-2.76px;fill:#333;"><path d="M1152 800v64q0 14-9 23t-23 9h-352v352q0 14-9 23t-23 9h-64q-14 0-23-9t-9-23v-352h-352q-14 0-23-9t-9-23v-64q0-14 9-23t23-9h352v-352q0-14 9-23t23-9h64q14 0 23 9t9 23v352h352q14 0 23 9t9 23zM1280 1248v-832q0-66-47-113t-113-47h-832q-66 0-113 47t-47 113v832q0 66 47 113t113 47h832q66 0 113-47t47-113zM1408 416v832q0 119-84.500 203.500t-203.500 84.500h-832q-119 0-203.500-84.500t-84.500-203.500v-832q0-119 84.500-203.500t203.500-84.500h832q119 0 203.500 84.500t84.500 203.500z"/></svg></td></tr><tr><td class="k"><span class="cb"></span></td><td><svg class="fa" viewBox="0 0 1920 1792" style="width:13.93px;height:13px;vertical-align:-2.76px;fill:#333;"><path d="M416 1280q-66 0-113-47t-47-113v-704q0-66 47-113t113-47h1088q66 0 113 47t47 113v704q0 66-47 113t-113 47h-1088zM384 416v704q0 13 9.5 22.5t22.5 9.5h1088q13 0 22.5-9.5t9.500-22.5v-704q0-13-9.500-22.5t-22.5-9.5h-1088q-13 0-22.5 9.5t-9.500 22.5zM1760 1344h160v96q0 40-47 68t-113 28h-1600q-66 0-113-28t-47-68v-96h1760zM1040 1440q16 0 16-16t-16-16h-160q-16 0-16 16t16 16h160z"/></svg>00:0C:29:0C:E2:3D</td><td>10.10.36.65</td><td></td><td></td><td>&lt;1m ago</td><td><svg class="fa" viewBox="0 0 1792 1792" style="width:13.00px;height:13px;vertical-align:-2.76px;fill:#333;"><path d="M1664 960q-152-236-381-353 61 104 61 225 0 185-131.5 316.5t-316.5 131.5-316.5-131.5-131.5-316.5q0-121 61-225-229 117-381 353 133 205 333.5 326.5t434.5 121.5 434.5-121.5 333.5-326.5zM944 576q0-20-14-34t-34-14q-125 0-214.5 89.5t-89.5 214.5q0 20 14 34t34 14 34-14 14-34q0-86 61-147t147-61q20 0 34-14t14-34zM1792 960q0 34-20 69-140 230-376.5 368.5t-499.5 138.5-499.5-139-376.500-368q-20-35-20-69t20-69q140-229 376.5-368t499.5-139 499.5 139 376.5 368q20 35 20 69z"/></svg><svg class="fa" viewBox="128 0 1536 1792" style="width:11.14px;height:13px;vertical-align:-2.76px;fill:#d9534f;"><path d="M1639 1056q0 5-1 7-64 268-268 434.5t-478 166.5q-146 0-282.5-55t-243.5-157l-129 129q-19 19-45 19t-45-19-19-45v-448q0-26 19-45t45-19h448q26 0 45 19t19 45-19 45l-137 137q71 66 161 102t187 36q134 0 250-65t186-179q11-17 53-117 8-23 30-23h192q13 0 22.5 9.5t9.500 22.5zM1664 256v448q0 26-19 45t-45 19h-448q-26 0-45-19t-19-45 19-45l138-138q-148-137-349-137-134 0-250 65t-186 179q-11 17-53 117-8 23-30 23h-199q-13 0-22.5-9.5t-9.5-22.5v-7q65-268 270-434.5t480-166.5q146 0 284 55.5t245 156.5l130-129q19-19 45-19t45 19 19 45z"/></svg><svg class="fa" viewBox="0 0 1792 1792" style="width:13.00px;height:13px;vertical-align:-2.76px;fill:#333;"><path d="M384 1184v64q0 13-9.500 22.500t-22.500 9.500h-64q-13 0-22.500-9.500t-9.500-22.500v-64q0-13 9.500-22.500t22.500-9.500h64q13 0 22.500 9.500t9.500 22.500zM384 928v64q0 13-9.500 22.500t-22.500 9.500h-64q-13 0-22.500-9.500t-9.500-22.500v-64q0-13 9.500-22.500t22.500-9.500h64q13 0 22.500 9.500t9.500 22.500zM384 672v64q0 13-9.500 22.500t-22.500 9.500h-64q-13 0-22.500-9.500t-9.500-22.500v-64q0-13 9.500-22.500t22.500-9.500h64q13 0 22.500 9.500t9.500 22.500zM1536 1184v64q0 13-9.500 22.500t-22.500 9.500h-960q-13 0-22.500-9.500t-9.500-22.500v-64q0-13 9.500-22.500t22.500-9.500h960q13 0 22.500 9.500t9.500 22.500zM1536 928v64q0 13-9.500 22.500t-22.500 9.500h-960q-13 0-22.500-9.500t-9.500-22.500v-64q0-13 9.500-22.500t22.500-9.500h960q13 0 22.500 9.500t9.500 22.500zM1536 672v64q0 13-9.500 22.500t-22.500 9.500h-960q-13 0-22.500-9.500t-9.500-22.500v-64q0-13 9.500-22.500t22.500-9.500h960q13 0 22.500 9.500t9.500 22.500zM1664 1376v-832q0-13-9.500-22.500t-22.500-9.500h-1472q-13 0-22.500 9.500t-9.500 22.500v832q0 13 9.500 22.500t22.500 9.500h1472q13 0 22.500-9.500t9.500-22.500zM1792 288v1088q0 66-47 113t-113 47h-1472q-66 0-113-47t-47-113v-1088q0-66 47-113t113-47h1472q66 0 113 47t47 113z"/></svg>Visibility Sensor</td><td>EPT_UNKNOWN</td><td class="st"><svg class="fa" viewBox="0 0 1792 1792" style="width:13.00px;height:13px;vertical-align:-2.76px;fill:#5cb85c;"><path d="M1728 320v763q0 39-35 57-10 5-17 9-218 116-369 116-88 0-158-35l-28-14q-64-33-99-48t-91-29-114-14q-102 0-235.5 44t-228.5 102q-15 9-33 9-16 0-32-8-32-19-32-56v-742q0-35 31-55 35-21 78.500-42.5t114-52 152.500-49.5 155-19q112 0 209 31t209 86q38 19 89 19 122 0 310-112 22-12 31-17 31-16 62 2 31 20 31 55zM320 256q0 35-17.5 64t-46.5 46v1266q0 14-9 23t-23 9h-64q-14 0-23-9t-9-23v-1266q-29-17-46.5-46t-17.5-64q0-53 37.5-90.500t90.500-37.5 90.500 37.5 37.500 90.500z"/></svg><svg class="fa" viewBox="0 0 1920 1792" style="width:13.93px;height:13px;vertical-align:-2.76px;fill:#333;"><path d="M416 1280q-66 0-113-47t-47-113v-704q0-66 47-113t113-47h1088q66 0 113 47t47 113v704q0 66-47 113t-113 47h-1088zM384 416v704q0 13 9.5 22.5t22.5 9.5h1088q13 0 22.5-9.5t9.500-22.5v-704q0-13-9.500-22.5t-22.5-9.5h-1088q-13 0-22.5 9.5t-9.500 22.5zM1760 1344h160v96q0 40-47 68t-113 28h-1600q-66 0-113-28t-47-68v-96h1760zM1040 1440q16 0 16-16t-16-16h-160q-16 0-16 16t16 16h160z"/></svg><svg class="fa" viewBox="0 0 1792 1792" style="width:13.00px;height:13px;vertical-align:-2.76px;fill:#999;"><path d="M1792 1248v320q0 40-28 68t-68 28h-320q-40 0-68-28t-28-68v-320q0-40 28-68t68-28h96v-192h-512v192h96q40 0 68 28t28 68v320q0 40-28 68t-68 28h-320q-40 0-68-28t-28-68v-320q0-40 28-68t68-28h96v-192h-512v192h96q40 0 68 28t28 68v320q0 40-28 68t-68 28h-320q-40 0-68-28t-28-68v-320q0-40 28-68t68-28h96v-192q0-52 38-90t90-38h512v-192h-96q-40 0-68-28t-28-68v-320q0-40 28-68t68-28h320q40 0 68 28t28 68v320q0 40-28 68t-68 28h-96v192h512q52 0 90 38t38 90v192h96q40 0 68 28t28 68z"/></svg><svg class="fa" viewBox="0 0 1536 1792" style="width:11.14px;height:13px;vertical-align:-2.76px;fill:#000;"><path d="M1536 896q0 156-61 298t-164 245-245 164-298 61q-172 0-327-72.5t-264-204.5q-7-10-6.500-22.5t8.500-20.5l137-138q10-9 25-9 16 2 23 12 73 95 179 147t225 52q104 0 198.5-40.5t163.500-109.5 109.500-163.5 40.500-198.5-40.500-198.5-109.500-163.5-163.500-109.5-198.5-40.5q-98 0-188 35.5t-160 101.5l137 138q31 30 14 69-17 40-59 40h-448q-26 0-45-19t-19-45v-448q0-42 40-59 39-17 69 14l130 129q107-101 244.5-156.5t284.500-55.5q156 0 298 61t245 164 164 245 61 298zM896 608v448q0 14-9 23t-23 9h-320q-14 0-23-9t-9-23v-64q0-14 9-23t23-9h224v-352q0-14 9-23t23-9h64q14 0 23 9t9 23z"/></svg><svg class="fa" viewBox="0 0 1536 1792" style="width:11.14px;height:13px;vertical-align:-2.76px;fill:#337ab7;"><path d="M1536 896q0 156-61 298t-164 245-245 164-298 61q-172 0-327-72.5t-264-204.5q-7-10-6.500-22.5t8.500-20.5l137-138q10-9 25-9 16 2 23 12 73 95 179 147t225 52q104 0 198.5-40.5t163.500-109.5 109.500-163.5 40.500-198.5-40.500-198.5-109.500-163.5-163.500-109.5-198.5-40.5q-98 0-188 35.5t-160 101.5l137 138q31 30 14 69-17 40-59 40h-448q-26 0-45-19t-19-45v-448q0-42 40-59 39-17 69 14l130 129q107-101 244.5-156.5t284.500-55.5q156 0 298 61t245 164 164 245 61 298zM896 608v448q0 14-9 23t-23 9h-320q-14 0-23-9t-9-23v-64q0-14 9-23t23-9h224v-352q0-14 9-23t23-9h64q14 0 23 9t9 23z"/></svg><svg class="fa" viewBox="0 0 1536 1792" style="width:11.14px;height:13px;vertical-align:-2.76px;fill:#5b3f9e;"><path d="M1536 896q0 156-61 298t-164 245-245 164-298 61q-172 0-327-72.5t-264-204.5q-7-10-6.500-22.5t8.500-20.5l137-138q10-9 25-9 16 2 23 12 73 95 179 147t225 52q104 0 198.5-40.5t163.500-109.5 109.500-163.5 40.500-198.5-40.500-198.5-109.500-163.5-163.500-109.5-198.5-40.5q-98 0-188 35.5t-160 101.5l137 138q31 30 14 69-17 40-59 40h-448q-26 0-45-19t-19-45v-448q0-42 40-59 39-17 69 14l130 129q107-101 244.5-156.5t284.500-55.5q156 0 298 61t245 164 164 245 61 298zM896 608v448q0 14-9 23t-23 9h-320q-14 0-23-9t-9-23v-64q0-14 9-23t23-9h224v-352q0-14 9-23t23-9h64q14 0 23 9t9 23z"/></svg><br><span class="l2"><svg class="fa" viewBox="0 0 1536 1792" style="width:11.14px;height:13px;vertical-align:-2.76px;fill:#0000ff;"><path d="M1536 896q0 156-61 298t-164 245-245 164-298 61q-172 0-327-72.5t-264-204.5q-7-10-6.500-22.5t8.500-20.5l137-138q10-9 25-9 16 2 23 12 73 95 179 147t225 52q104 0 198.5-40.5t163.500-109.5 109.500-163.5 40.500-198.5-40.500-198.5-109.500-163.5-163.500-109.5-198.5-40.5q-98 0-188 35.5t-160 101.5l137 138q31 30 14 69-17 40-59 40h-448q-26 0-45-19t-19-45v-448q0-42 40-59 39-17 69 14l130 129q107-101 244.5-156.5t284.500-55.5q156 0 298 61t245 164 164 245 61 298zM896 608v448q0 14-9 23t-23 9h-320q-14 0-23-9t-9-23v-64q0-14 9-23t23-9h224v-352q0-14 9-23t23-9h64q14 0 23 9t9 23z"/></svg><svg class="fa" viewBox="0 0 1536 1792" style="width:11.14px;height:13px;vertical-align:-2.76px;fill:#0b4f8a;"><path d="M1536 896q0 156-61 298t-164 245-245 164-298 61q-172 0-327-72.5t-264-204.5q-7-10-6.500-22.5t8.500-20.5l137-138q10-9 25-9 16 2 23 12 73 95 179 147t225 52q104 0 198.5-40.5t163.500-109.5 109.500-163.5 40.500-198.5-40.500-198.5-109.500-163.5-163.500-109.5-198.5-40.5q-98 0-188 35.5t-160 101.5l137 138q31 30 14 69-17 40-59 40h-448q-26 0-45-19t-19-45v-448q0-42 40-59 39-17 69 14l130 129q107-101 244.5-156.5t284.500-55.5q156 0 298 61t245 164 164 245 61 298zM896 608v448q0 14-9 23t-23 9h-320q-14 0-23-9t-9-23v-64q0-14 9-23t23-9h224v-352q0-14 9-23t23-9h64q14 0 23 9t9 23z"/></svg></span></td><td><div class="pg"><span style="width:38px;background-color:#ffa90a">7</span><span style="width:48.5px;background-color:#ba9608">9</span><span style="width:21.5px;background-color:#e66465">4</span></div></td><td class="c"><svg class="fa" viewBox="0 0 1408 1792" style="width:10.21px;height:13px;vertical-align:-2.76px;fill:#333;"><path d="M1152 800v64q0 14-9 23t-23 9h-352v352q0 14-9 23t-23 9h-64q-14 0-23-9t-9-23v-352h-352q-14 0-23-9t-9-23v-64q0-14 9-23t23-9h352v-352q0-14 9-23t23-9h64q14 0 23 9t9 23v352h352q14 0 23 9t9 23zM1280 1248v-832q0-66-47-113t-113-47h-832q-66 0-113 47t-47 113v832q0 66 47 113t113 47h832q66 0 113-47t47-113zM1408 416v832q0 119-84.500 203.500t-203.500 84.500h-832q-119 0-203.500-84.500t-84.500-203.500v-832q0-119 84.500-203.500t203.500-84.500h832q119 0 203.500 84.500t84.500 203.500z"/></svg></td></tr><tr><td class="k"><span class="cb"></span></td><td><svg class="fa" viewBox="0 0 1920 1792" style="width:13.93px;height:13px;vertical-align:-2.76px;fill:#333;"><path d="M416 1280q-66 0-113-47t-47-113v-704q0-66 47-113t113-47h1088q66 0 113 47t47 113v704q0 66-47 113t-113 47h-1088zM384 416v704q0 13 9.5 22.5t22.5 9.5h1088q13 0 22.5-9.5t9.500-22.5v-704q0-13-9.500-22.5t-22.5-9.5h-1088q-13 0-22.5 9.5t-9.500 22.5zM1760 1344h160v96q0 40-47 68t-113 28h-1600q-66 0-113-28t-47-68v-96h1760zM1040 1440q16 0 16-16t-16-16h-160q-16 0-16 16t16 16h160z"/></svg>00:00:00:00:00:00</td><td>0.0.0.0</td><td></td><td>aaaUserTest</td><td>&lt;1m ago</td><td><svg class="fa" viewBox="0 0 1792 1792" style="width:13.00px;height:13px;vertical-align:-2.76px;fill:#333;"><path d="M1664 960q-152-236-381-353 61 104 61 225 0 185-131.5 316.5t-316.5 131.5-316.5-131.5-131.5-316.5q0-121 61-225-229 117-381 353 133 205 333.5 326.5t434.5 121.5 434.5-121.5 333.5-326.5zM944 576q0-20-14-34t-34-14q-125 0-214.5 89.5t-89.5 214.5q0 20 14 34t34 14 34-14 14-34q0-86 61-147t147-61q20 0 34-14t14-34zM1792 960q0 34-20 69-140 230-376.5 368.5t-499.5 138.5-499.5-139-376.500-368q-20-35-20-69t20-69q140-229 376.5-368t499.5-139 499.5 139 376.5 368q20 35 20 69z"/></svg><svg class="fa" viewBox="0 0 1792 1792" style="width:13.00px;height:13px;vertical-align:-2.76px;fill:#333;"><path d="M384 1184v64q0 13-9.500 22.500t-22.500 9.500h-64q-13 0-22.500-9.500t-9.500-22.500v-64q0-13 9.500-22.500t22.500-9.500h64q13 0 22.500 9.500t9.500 22.500zM384 928v64q0 13-9.500 22.500t-22.500 9.500h-64q-13 0-22.500-9.500t-9.500-22.500v-64q0-13 9.500-22.500t22.500-9.500h64q13 0 22.500 9.500t9.500 22.500zM384 672v64q0 13-9.500 22.500t-22.500 9.500h-64q-13 0-22.500-9.500t-9.500-22.500v-64q0-13 9.500-22.500t22.500-9.500h64q13 0 22.500 9.500t9.500 22.500zM1536 1184v64q0 13-9.500 22.500t-22.500 9.500h-960q-13 0-22.500-9.500t-9.500-22.500v-64q0-13 9.500-22.500t22.500-9.500h960q13 0 22.500 9.500t9.500 22.500zM1536 928v64q0 13-9.500 22.500t-22.500 9.500h-960q-13 0-22.500-9.500t-9.500-22.500v-64q0-13 9.500-22.500t22.500-9.500h960q13 0 22.500 9.500t9.500 22.500zM1536 672v64q0 13-9.500 22.500t-22.500 9.500h-960q-13 0-22.500-9.500t-9.500-22.500v-64q0-13 9.500-22.500t22.500-9.500h960q13 0 22.500 9.500t9.500 22.500zM1664 1376v-832q0-13-9.500-22.500t-22.500-9.500h-1472q-13 0-22.500 9.500t-9.500 22.500v832q0 13 9.500 22.500t22.500 9.500h1472q13 0 22.500-9.500t9.500-22.500zM1792 288v1088q0 66-47 113t-113 47h-1472q-66 0-113-47t-47-113v-1088q0-66 47-113t113-47h1472q66 0 113 47t47 113z"/></svg>Monitor2</td><td></td><td class="st"><svg class="fa" viewBox="0 0 1792 1792" style="width:13.00px;height:13px;vertical-align:-2.76px;fill:#d9534f;"><path d="M1728 320v763q0 39-35 57-10 5-17 9-218 116-369 116-88 0-158-35l-28-14q-64-33-99-48t-91-29-114-14q-102 0-235.5 44t-228.5 102q-15 9-33 9-16 0-32-8-32-19-32-56v-742q0-35 31-55 35-21 78.500-42.5t114-52 152.500-49.5 155-19q112 0 209 31t209 86q38 19 89 19 122 0 310-112 22-12 31-17 31-16 62 2 31 20 31 55zM320 256q0 35-17.5 64t-46.5 46v1266q0 14-9 23t-23 9h-64q-14 0-23-9t-9-23v-1266q-29-17-46.5-46t-17.5-64q0-53 37.5-90.500t90.500-37.5 90.500 37.5 37.500 90.500z"/></svg><svg class="fa" viewBox="0 0 1920 1792" style="width:13.93px;height:13px;vertical-align:-2.76px;fill:#333;"><path d="M416 1280q-66 0-113-47t-47-113v-704q0-66 47-113t113-47h1088q66 0 113 47t47 113v704q0 66-47 113t-113 47h-1088zM384 416v704q0 13 9.5 22.5t22.5 9.5h1088q13 0 22.5-9.5t9.500-22.5v-704q0-13-9.500-22.5t-22.5-9.5h-1088q-13 0-22.5 9.5t-9.500 22.5zM1760 1344h160v96q0 40-47 68t-113 28h-1600q-66 0-113-28t-47-68v-96h1760zM1040 1440q16 0 16-16t-16-16h-160q-16 0-16 16t16 16h160z"/></svg><svg class="fa" viewBox="0 0 1792 1792" style="width:13.00px;height:13px;vertical-align:-2.76px;fill:#d9534f;"><path d="M1792 1248v320q0 40-28 68t-68 28h-320q-40 0-68-28t-28-68v-320q0-40 28-68t68-28h96v-192h-512v192h96q40 0 68 28t28 68v320q0 40-28 68t-68 28h-320q-40 0-68-28t-28-68v-320q0-40 28-68t68-28h96v-192h-512v192h96q40 0 68 28t28 68v320q0 40-28 68t-68 28h-320q-40 0-68-28t-28-68v-320q0-40 28-68t68-28h96v-192q0-52 38-90t90-38h512v-192h-96q-40 0-68-28t-28-68v-320q0-40 28-68t68-28h320q40 0 68 28t28 68v320q0 40-28 68t-68 28h-96v192h512q52 0 90 38t38 90v192h96q40 0 68 28t28 68z"/></svg><svg class="fa" viewBox="0 0 1536 1792" style="width:11.14px;height:13px;vertical-align:-2.76px;fill:#000;"><path d="M1536 896q0 156-61 298t-164 245-245 164-298 61q-172 0-327-72.5t-264-204.5q-7-10-6.500-22.5t8.500-20.5l137-138q10-9 25-9 16 2 23 12 73 95 179 147t225 52q104 0 198.5-40.5t163.500-109.5 109.500-163.5 40.500-198.5-40.500-198.5-109.500-163.5-163.500-109.5-198.5-40.5q-98 0-188 35.5t-160 101.5l137 138q31 30 14 69-17 40-59 40h-448q-26 0-45-19t-19-45v-448q0-42 40-59 39-17 69 14l130 129q107-101 244.5-156.5t284.500-55.5q156 0 298 61t245 164 164 245 61 298zM896 608v448q0 14-9 23t-23 9h-320q-14 0-23-9t-9-23v-64q0-14 9-23t23-9h224v-352q0-14 9-23t23-9h64q14 0 23 9t9 23z"/></svg><svg class="fa" viewBox="0 0 1536 1792" style="width:11.14px;height:13px;vertical-align:-2.76px;fill:#337ab7;"><path d="M1536 896q0 156-61 298t-164 245-245 164-298 61q-172 0-327-72.5t-264-204.5q-7-10-6.500-22.5t8.500-20.5l137-138q10-9 25-9 16 2 23 12 73 95 179 147t225 52q104 0 198.5-40.5t163.500-109.5 109.500-163.5 40.500-198.5-40.500-198.5-109.500-163.5-163.500-109.5-198.5-40.5q-98 0-188 35.5t-160 101.5l137 138q31 30 14 69-17 40-59 40h-448q-26 0-45-19t-19-45v-448q0-42 40-59 39-17 69 14l130 129q107-101 244.5-156.5t284.500-55.5q156 0 298 61t245 164 164 245 61 298zM896 608v448q0 14-9 23t-23 9h-320q-14 0-23-9t-9-23v-64q0-14 9-23t23-9h224v-352q0-14 9-23t23-9h64q14 0 23 9t9 23z"/></svg><svg class="fa" viewBox="0 0 1536 1792" style="width:11.14px;height:13px;vertical-align:-2.76px;fill:#5b3f9e;"><path d="M1536 896q0 156-61 298t-164 245-245 164-298 61q-172 0-327-72.5t-264-204.5q-7-10-6.500-22.5t8.500-20.5l137-138q10-9 25-9 16 2 23 12 73 95 179 147t225 52q104 0 198.5-40.5t163.500-109.5 109.500-163.5 40.500-198.5-40.500-198.5-109.500-163.5-163.500-109.5-198.5-40.5q-98 0-188 35.5t-160 101.5l137 138q31 30 14 69-17 40-59 40h-448q-26 0-45-19t-19-45v-448q0-42 40-59 39-17 69 14l130 129q107-101 244.5-156.5t284.500-55.5q156 0 298 61t245 164 164 245 61 298zM896 608v448q0 14-9 23t-23 9h-320q-14 0-23-9t-9-23v-64q0-14 9-23t23-9h224v-352q0-14 9-23t23-9h64q14 0 23 9t9 23z"/></svg><br><span class="l2"><svg class="fa" viewBox="0 0 1536 1792" style="width:11.14px;height:13px;vertical-align:-2.76px;fill:#0000ff;"><path d="M1536 896q0 156-61 298t-164 245-245 164-298 61q-172 0-327-72.5t-264-204.5q-7-10-6.500-22.5t8.500-20.5l137-138q10-9 25-9 16 2 23 12 73 95 179 147t225 52q104 0 198.5-40.5t163.500-109.5 109.500-163.5 40.500-198.5-40.500-198.5-109.500-163.5-163.500-109.5-198.5-40.5q-98 0-188 35.5t-160 101.5l137 138q31 30 14 69-17 40-59 40h-448q-26 0-45-19t-19-45v-448q0-42 40-59 39-17 69 14l130 129q107-101 244.5-156.5t284.500-55.5q156 0 298 61t245 164 164 245 61 298zM896 608v448q0 14-9 23t-23 9h-320q-14 0-23-9t-9-23v-64q0-14 9-23t23-9h224v-352q0-14 9-23t23-9h64q14 0 23 9t9 23z"/></svg><svg class="fa" viewBox="0 0 1536 1792" style="width:11.14px;height:13px;vertical-align:-2.76px;fill:#0b4f8a;"><path d="M1536 896q0 156-61 298t-164 245-245 164-298 61q-172 0-327-72.5t-264-204.5q-7-10-6.500-22.5t8.500-20.5l137-138q10-9 25-9 16 2 23 12 73 95 179 147t225 52q104 0 198.5-40.5t163.500-109.5 109.500-163.5 40.500-198.5-40.500-198.5-109.500-163.5-163.500-109.5-198.5-40.5q-98 0-188 35.5t-160 101.5l137 138q31 30 14 69-17 40-59 40h-448q-26 0-45-19t-19-45v-448q0-42 40-59 39-17 69 14l130 129q107-101 244.5-156.5t284.500-55.5q156 0 298 61t245 164 164 245 61 298zM896 608v448q0 14-9 23t-23 9h-320q-14 0-23-9t-9-23v-64q0-14 9-23t23-9h224v-352q0-14 9-23t23-9h64q14 0 23 9t9 23z"/></svg></span></td><td><div class="pg"><span style="width:108px;background-color:#aaa">None</span></div></td><td class="c"><svg class="fa" viewBox="0 0 1408 1792" style="width:10.21px;height:13px;vertical-align:-2.76px;fill:#333;"><path d="M1152 800v64q0 14-9 23t-23 9h-352v352q0 14-9 23t-23 9h-64q-14 0-23-9t-9-23v-352h-352q-14 0-23-9t-9-23v-64q0-14 9-23t23-9h352v-352q0-14 9-23t23-9h64q14 0 23 9t9 23v352h352q14 0 23 9t9 23zM1280 1248v-832q0-66-47-113t-113-47h-832q-66 0-113 47t-47 113v832q0 66 47 113t113 47h832q66 0 113-47t47-113zM1408 416v832q0 119-84.500 203.500t-203.500 84.500h-832q-119 0-203.500-84.500t-84.500-203.500v-832q0-119 84.500-203.500t203.500-84.500h832q119 0 203.500 84.500t84.500 203.500z"/></svg></td></tr><tr style="height:55px"><td class="k"><span class="cb"></span></td><td><svg class="fa" viewBox="0 0 1920 1792" style="width:13.93px;height:13px;vertical-align:-2.76px;fill:#333;"><path d="M416 1280q-66 0-113-47t-47-113v-704q0-66 47-113t113-47h1088q66 0 113 47t47 113v704q0 66-47 113t-113 47h-1088zM384 416v704q0 13 9.5 22.5t22.5 9.5h1088q13 0 22.5-9.5t9.500-22.5v-704q0-13-9.500-22.5t-22.5-9.5h-1088q-13 0-22.5 9.5t-9.500 22.5zM1760 1344h160v96q0 40-47 68t-113 28h-1600q-66 0-113-28t-47-68v-96h1760zM1040 1440q16 0 16-16t-16-16h-160q-16 0-16 16t16 16h160z"/></svg>00:00:00:00:00:00</td><td>0.0.0.0</td><td></td><td>monitor</td><td>5m ago</td><td><svg class="fa" viewBox="0 0 1792 1792" style="width:13.00px;height:13px;vertical-align:-2.76px;fill:#333;"><path d="M1664 960q-152-236-381-353 61 104 61 225 0 185-131.5 316.5t-316.5 131.5-316.5-131.5-131.5-316.5q0-121 61-225-229 117-381 353 133 205 333.5 326.5t434.5 121.5 434.5-121.5 333.5-326.5zM944 576q0-20-14-34t-34-14q-125 0-214.5 89.5t-89.5 214.5q0 20 14 34t34 14 34-14 14-34q0-86 61-147t147-61q20 0 34-14t14-34zM1792 960q0 34-20 69-140 230-376.5 368.5t-499.5 138.5-499.5-139-376.500-368q-20-35-20-69t20-69q140-229 376.5-368t499.5-139 499.5 139 376.5 368q20 35 20 69z"/></svg><svg class="fa" viewBox="0 0 1792 1792" style="width:13.00px;height:13px;vertical-align:-2.76px;fill:#333;"><path d="M384 1184v64q0 13-9.500 22.500t-22.500 9.500h-64q-13 0-22.500-9.500t-9.500-22.500v-64q0-13 9.500-22.500t22.500-9.500h64q13 0 22.500 9.500t9.500 22.500zM384 928v64q0 13-9.500 22.500t-22.500 9.500h-64q-13 0-22.500-9.500t-9.500-22.500v-64q0-13 9.500-22.500t22.500-9.500h64q13 0 22.500 9.500t9.500 22.500zM384 672v64q0 13-9.500 22.500t-22.500 9.500h-64q-13 0-22.500-9.500t-9.500-22.500v-64q0-13 9.500-22.500t22.500-9.500h64q13 0 22.500 9.500t9.500 22.500zM1536 1184v64q0 13-9.500 22.500t-22.500 9.500h-960q-13 0-22.500-9.500t-9.500-22.500v-64q0-13 9.500-22.500t22.500-9.500h960q13 0 22.500 9.500t9.500 22.500zM1536 928v64q0 13-9.500 22.500t-22.500 9.500h-960q-13 0-22.500-9.500t-9.500-22.500v-64q0-13 9.500-22.500t22.500-9.500h960q13 0 22.500 9.500t9.500 22.500zM1536 672v64q0 13-9.500 22.500t-22.500 9.500h-960q-13 0-22.500-9.500t-9.500-22.500v-64q0-13 9.500-22.500t22.500-9.500h960q13 0 22.500 9.500t9.500 22.500zM1664 1376v-832q0-13-9.500-22.500t-22.500-9.500h-1472q-13 0-22.500 9.500t-9.500 22.500v832q0 13 9.500 22.500t22.500 9.500h1472q13 0 22.500-9.500t9.500-22.500zM1792 288v1088q0 66-47 113t-113 47h-1472q-66 0-113-47t-47-113v-1088q0-66 47-113t113-47h1472q66 0 113 47t47 113z"/></svg>Monitor</td><td></td><td class="st"><svg class="fa" viewBox="0 0 1792 1792" style="width:13.00px;height:13px;vertical-align:-2.76px;fill:#d9534f;"><path d="M1728 320v763q0 39-35 57-10 5-17 9-218 116-369 116-88 0-158-35l-28-14q-64-33-99-48t-91-29-114-14q-102 0-235.5 44t-228.5 102q-15 9-33 9-16 0-32-8-32-19-32-56v-742q0-35 31-55 35-21 78.500-42.5t114-52 152.500-49.5 155-19q112 0 209 31t209 86q38 19 89 19 122 0 310-112 22-12 31-17 31-16 62 2 31 20 31 55zM320 256q0 35-17.5 64t-46.5 46v1266q0 14-9 23t-23 9h-64q-14 0-23-9t-9-23v-1266q-29-17-46.5-46t-17.5-64q0-53 37.5-90.500t90.500-37.5 90.500 37.5 37.500 90.500z"/></svg><svg class="fa" viewBox="0 0 1920 1792" style="width:13.93px;height:13px;vertical-align:-2.76px;fill:#333;"><path d="M416 1280q-66 0-113-47t-47-113v-704q0-66 47-113t113-47h1088q66 0 113 47t47 113v704q0 66-47 113t-113 47h-1088zM384 416v704q0 13 9.5 22.5t22.5 9.5h1088q13 0 22.5-9.5t9.500-22.5v-704q0-13-9.500-22.5t-22.5-9.5h-1088q-13 0-22.5 9.5t-9.500 22.5zM1760 1344h160v96q0 40-47 68t-113 28h-1600q-66 0-113-28t-47-68v-96h1760zM1040 1440q16 0 16-16t-16-16h-160q-16 0-16 16t16 16h160z"/></svg><svg class="fa" viewBox="0 0 1792 1792" style="width:13.00px;height:13px;vertical-align:-2.76px;fill:#d9534f;"><path d="M1792 1248v320q0 40-28 68t-68 28h-320q-40 0-68-28t-28-68v-320q0-40 28-68t68-28h96v-192h-512v192h96q40 0 68 28t28 68v320q0 40-28 68t-68 28h-320q-40 0-68-28t-28-68v-320q0-40 28-68t68-28h96v-192h-512v192h96q40 0 68 28t28 68v320q0 40-28 68t-68 28h-320q-40 0-68-28t-28-68v-320q0-40 28-68t68-28h96v-192q0-52 38-90t90-38h512v-192h-96q-40 0-68-28t-28-68v-320q0-40 28-68t68-28h320q40 0 68 28t28 68v320q0 40-28 68t-68 28h-96v192h512q52 0 90 38t38 90v192h96q40 0 68 28t28 68z"/></svg><svg class="fa" viewBox="0 0 1536 1792" style="width:11.14px;height:13px;vertical-align:-2.76px;fill:#000;"><path d="M1536 896q0 156-61 298t-164 245-245 164-298 61q-172 0-327-72.5t-264-204.5q-7-10-6.500-22.5t8.500-20.5l137-138q10-9 25-9 16 2 23 12 73 95 179 147t225 52q104 0 198.5-40.5t163.500-109.5 109.500-163.5 40.500-198.5-40.500-198.5-109.500-163.5-163.500-109.5-198.5-40.5q-98 0-188 35.5t-160 101.5l137 138q31 30 14 69-17 40-59 40h-448q-26 0-45-19t-19-45v-448q0-42 40-59 39-17 69 14l130 129q107-101 244.5-156.5t284.500-55.5q156 0 298 61t245 164 164 245 61 298zM896 608v448q0 14-9 23t-23 9h-320q-14 0-23-9t-9-23v-64q0-14 9-23t23-9h224v-352q0-14 9-23t23-9h64q14 0 23 9t9 23z"/></svg><svg class="fa" viewBox="0 0 1536 1792" style="width:11.14px;height:13px;vertical-align:-2.76px;fill:#337ab7;"><path d="M1536 896q0 156-61 298t-164 245-245 164-298 61q-172 0-327-72.5t-264-204.5q-7-10-6.500-22.5t8.500-20.5l137-138q10-9 25-9 16 2 23 12 73 95 179 147t225 52q104 0 198.5-40.5t163.500-109.5 109.500-163.5 40.500-198.5-40.500-198.5-109.500-163.5-163.500-109.5-198.5-40.5q-98 0-188 35.5t-160 101.5l137 138q31 30 14 69-17 40-59 40h-448q-26 0-45-19t-19-45v-448q0-42 40-59 39-17 69 14l130 129q107-101 244.5-156.5t284.500-55.5q156 0 298 61t245 164 164 245 61 298zM896 608v448q0 14-9 23t-23 9h-320q-14 0-23-9t-9-23v-64q0-14 9-23t23-9h224v-352q0-14 9-23t23-9h64q14 0 23 9t9 23z"/></svg><svg class="fa" viewBox="0 0 1536 1792" style="width:11.14px;height:13px;vertical-align:-2.76px;fill:#5b3f9e;"><path d="M1536 896q0 156-61 298t-164 245-245 164-298 61q-172 0-327-72.5t-264-204.5q-7-10-6.500-22.5t8.500-20.5l137-138q10-9 25-9 16 2 23 12 73 95 179 147t225 52q104 0 198.5-40.5t163.500-109.5 109.500-163.5 40.500-198.5-40.500-198.5-109.500-163.5-163.500-109.5-198.5-40.5q-98 0-188 35.5t-160 101.5l137 138q31 30 14 69-17 40-59 40h-448q-26 0-45-19t-19-45v-448q0-42 40-59 39-17 69 14l130 129q107-101 244.5-156.5t284.500-55.5q156 0 298 61t245 164 164 245 61 298zM896 608v448q0 14-9 23t-23 9h-320q-14 0-23-9t-9-23v-64q0-14 9-23t23-9h224v-352q0-14 9-23t23-9h64q14 0 23 9t9 23z"/></svg><br><span class="l2"><svg class="fa" viewBox="0 0 1536 1792" style="width:11.14px;height:13px;vertical-align:-2.76px;fill:#0000ff;"><path d="M1536 896q0 156-61 298t-164 245-245 164-298 61q-172 0-327-72.5t-264-204.5q-7-10-6.500-22.5t8.500-20.5l137-138q10-9 25-9 16 2 23 12 73 95 179 147t225 52q104 0 198.5-40.5t163.500-109.5 109.500-163.5 40.500-198.5-40.500-198.5-109.500-163.5-163.500-109.5-198.5-40.5q-98 0-188 35.5t-160 101.5l137 138q31 30 14 69-17 40-59 40h-448q-26 0-45-19t-19-45v-448q0-42 40-59 39-17 69 14l130 129q107-101 244.5-156.5t284.500-55.5q156 0 298 61t245 164 164 245 61 298zM896 608v448q0 14-9 23t-23 9h-320q-14 0-23-9t-9-23v-64q0-14 9-23t23-9h224v-352q0-14 9-23t23-9h64q14 0 23 9t9 23z"/></svg><svg class="fa" viewBox="0 0 1536 1792" style="width:11.14px;height:13px;vertical-align:-2.76px;fill:#0b4f8a;"><path d="M1536 896q0 156-61 298t-164 245-245 164-298 61q-172 0-327-72.5t-264-204.5q-7-10-6.500-22.5t8.500-20.5l137-138q10-9 25-9 16 2 23 12 73 95 179 147t225 52q104 0 198.5-40.5t163.500-109.5 109.500-163.5 40.500-198.5-40.500-198.5-109.500-163.5-163.500-109.5-198.5-40.5q-98 0-188 35.5t-160 101.5l137 138q31 30 14 69-17 40-59 40h-448q-26 0-45-19t-19-45v-448q0-42 40-59 39-17 69 14l130 129q107-101 244.5-156.5t284.500-55.5q156 0 298 61t245 164 164 245 61 298zM896 608v448q0 14-9 23t-23 9h-320q-14 0-23-9t-9-23v-64q0-14 9-23t23-9h224v-352q0-14 9-23t23-9h64q14 0 23 9t9 23z"/></svg></span></td><td><div class="pg"><span style="width:108px;background-color:#aaa">None</span></div></td><td class="c"><svg class="fa" viewBox="0 0 1408 1792" style="width:10.21px;height:13px;vertical-align:-2.76px;fill:#333;"><path d="M1152 800v64q0 14-9 23t-23 9h-352v352q0 14-9 23t-23 9h-64q-14 0-23-9t-9-23v-352h-352q-14 0-23-9t-9-23v-64q0-14 9-23t23-9h352v-352q0-14 9-23t23-9h64q14 0 23 9t9 23v352h352q14 0 23 9t9 23zM1280 1248v-832q0-66-47-113t-113-47h-832q-66 0-113 47t-47 113v832q0 66 47 113t113 47h832q66 0 113-47t47-113zM1408 416v832q0 119-84.500 203.500t-203.500 84.500h-832q-119 0-203.500-84.500t-84.500-203.500v-832q0-119 84.500-203.500t203.500-84.500h832q119 0 203.500 84.500t84.500 203.500z"/></svg></td></tr><tr class="hi"><td class="k"><span class="cb"></span></td><td><svg class="fa" viewBox="0 0 1920 1792" style="width:13.93px;height:13px;vertical-align:-2.76px;fill:#333;"><path d="M416 1280q-66 0-113-47t-47-113v-704q0-66 47-113t113-47h1088q66 0 113 47t47 113v704q0 66-47 113t-113 47h-1088zM384 416v704q0 13 9.5 22.5t22.5 9.5h1088q13 0 22.5-9.5t9.500-22.5v-704q0-13-9.500-22.5t-22.5-9.5h-1088q-13 0-22.5 9.5t-9.500 22.5zM1760 1344h160v96q0 40-47 68t-113 28h-1600q-66 0-113-28t-47-68v-96h1760zM1040 1440q16 0 16-16t-16-16h-160q-16 0-16 16t16 16h160z"/></svg>B0:A7:B9:F8:83:DC</td><td>10.250.14.40</td><td>Tapo_SmartPlug</td><td></td><td>7m ago</td><td><svg class="fa" viewBox="0 0 1792 1792" style="width:13.00px;height:13px;vertical-align:-2.76px;fill:#333;"><path d="M1664 960q-152-236-381-353 61 104 61 225 0 185-131.5 316.5t-316.5 131.5-316.5-131.5-131.5-316.5q0-121 61-225-229 117-381 353 133 205 333.5 326.5t434.5 121.5 434.5-121.5 333.5-326.5zM944 576q0-20-14-34t-34-14q-125 0-214.5 89.5t-89.5 214.5q0 20 14 34t34 14 34-14 14-34q0-86 61-147t147-61q20 0 34-14t14-34zM1792 960q0 34-20 69-140 230-376.5 368.5t-499.5 138.5-499.5-139-376.500-368q-20-35-20-69t20-69q140-229 376.5-368t499.5-139 499.5 139 376.5 368q20 35 20 69z"/></svg><svg class="fa" viewBox="128 0 1536 1792" style="width:11.14px;height:13px;vertical-align:-2.76px;fill:#d9534f;"><path d="M1639 1056q0 5-1 7-64 268-268 434.5t-478 166.5q-146 0-282.5-55t-243.5-157l-129 129q-19 19-45 19t-45-19-19-45v-448q0-26 19-45t45-19h448q26 0 45 19t19 45-19 45l-137 137q71 66 161 102t187 36q134 0 250-65t186-179q11-17 53-117 8-23 30-23h192q13 0 22.5 9.5t9.500 22.5zM1664 256v448q0 26-19 45t-45 19h-448q-26 0-45-19t-19-45 19-45l138-138q-148-137-349-137-134 0-250 65t-186 179q-11 17-53 117-8 23-30 23h-199q-13 0-22.5-9.5t-9.5-22.5v-7q65-268 270-434.5t480-166.5q146 0 284 55.5t245 156.5l130-129q19-19 45-19t45 19 19 45z"/></svg><svg class="fa" viewBox="0 0 1792 1792" style="width:13.00px;height:13px;vertical-align:-2.76px;fill:#333;"><path d="M384 1184v64q0 13-9.500 22.500t-22.500 9.500h-64q-13 0-22.500-9.500t-9.500-22.500v-64q0-13 9.500-22.500t22.500-9.500h64q13 0 22.500 9.500t9.500 22.500zM384 928v64q0 13-9.500 22.500t-22.500 9.500h-64q-13 0-22.500-9.500t-9.500-22.500v-64q0-13 9.500-22.500t22.500-9.500h64q13 0 22.500 9.500t9.500 22.500zM384 672v64q0 13-9.500 22.500t-22.500 9.500h-64q-13 0-22.500-9.500t-9.500-22.500v-64q0-13 9.500-22.500t22.500-9.500h64q13 0 22.500 9.500t9.500 22.500zM1536 1184v64q0 13-9.500 22.500t-22.500 9.500h-960q-13 0-22.500-9.500t-9.500-22.500v-64q0-13 9.500-22.500t22.500-9.500h960q13 0 22.500 9.500t9.500 22.500zM1536 928v64q0 13-9.500 22.500t-22.500 9.500h-960q-13 0-22.500-9.500t-9.500-22.500v-64q0-13 9.500-22.500t22.500-9.500h960q13 0 22.500 9.500t9.500 22.500zM1536 672v64q0 13-9.500 22.500t-22.500 9.500h-960q-13 0-22.500-9.500t-9.500-22.500v-64q0-13 9.500-22.500t22.500-9.500h960q13 0 22.500 9.500t9.500 22.500zM1664 1376v-832q0-13-9.500-22.500t-22.500-9.500h-1472q-13 0-22.500 9.500t-9.500 22.500v832q0 13 9.500 22.500t22.500 9.500h1472q13 0 22.500-9.500t9.500-22.500zM1792 288v1088q0 66-47 113t-113 47h-1472q-66 0-113-47t-47-113v-1088q0-66 47-113t113-47h1472q66 0 113 47t47 113z"/></svg>Visibility Sensor</td><td>EPT_UNKNOWN</td><td class="st"><svg class="fa" viewBox="0 0 1792 1792" style="width:13.00px;height:13px;vertical-align:-2.76px;fill:#5cb85c;"><path d="M1728 320v763q0 39-35 57-10 5-17 9-218 116-369 116-88 0-158-35l-28-14q-64-33-99-48t-91-29-114-14q-102 0-235.5 44t-228.5 102q-15 9-33 9-16 0-32-8-32-19-32-56v-742q0-35 31-55 35-21 78.500-42.5t114-52 152.500-49.5 155-19q112 0 209 31t209 86q38 19 89 19 122 0 310-112 22-12 31-17 31-16 62 2 31 20 31 55zM320 256q0 35-17.5 64t-46.5 46v1266q0 14-9 23t-23 9h-64q-14 0-23-9t-9-23v-1266q-29-17-46.5-46t-17.5-64q0-53 37.5-90.500t90.500-37.5 90.500 37.5 37.500 90.500z"/></svg><svg class="fa" viewBox="0 0 1920 1792" style="width:13.93px;height:13px;vertical-align:-2.76px;fill:#333;"><path d="M416 1280q-66 0-113-47t-47-113v-704q0-66 47-113t113-47h1088q66 0 113 47t47 113v704q0 66-47 113t-113 47h-1088zM384 416v704q0 13 9.5 22.5t22.5 9.5h1088q13 0 22.5-9.5t9.500-22.5v-704q0-13-9.500-22.5t-22.5-9.5h-1088q-13 0-22.5 9.5t-9.500 22.5zM1760 1344h160v96q0 40-47 68t-113 28h-1600q-66 0-113-28t-47-68v-96h1760zM1040 1440q16 0 16-16t-16-16h-160q-16 0-16 16t16 16h160z"/></svg><svg class="fa" viewBox="0 0 1792 1792" style="width:13.00px;height:13px;vertical-align:-2.76px;fill:#999;"><path d="M1792 1248v320q0 40-28 68t-68 28h-320q-40 0-68-28t-28-68v-320q0-40 28-68t68-28h96v-192h-512v192h96q40 0 68 28t28 68v320q0 40-28 68t-68 28h-320q-40 0-68-28t-28-68v-320q0-40 28-68t68-28h96v-192h-512v192h96q40 0 68 28t28 68v320q0 40-28 68t-68 28h-320q-40 0-68-28t-28-68v-320q0-40 28-68t68-28h96v-192q0-52 38-90t90-38h512v-192h-96q-40 0-68-28t-28-68v-320q0-40 28-68t68-28h320q40 0 68 28t28 68v320q0 40-28 68t-68 28h-96v192h512q52 0 90 38t38 90v192h96q40 0 68 28t28 68z"/></svg><svg class="fa" viewBox="0 0 1536 1792" style="width:11.14px;height:13px;vertical-align:-2.76px;fill:#000;"><path d="M1536 896q0 156-61 298t-164 245-245 164-298 61q-172 0-327-72.5t-264-204.5q-7-10-6.500-22.5t8.500-20.5l137-138q10-9 25-9 16 2 23 12 73 95 179 147t225 52q104 0 198.5-40.5t163.500-109.5 109.500-163.5 40.500-198.5-40.500-198.5-109.500-163.5-163.500-109.5-198.5-40.5q-98 0-188 35.5t-160 101.5l137 138q31 30 14 69-17 40-59 40h-448q-26 0-45-19t-19-45v-448q0-42 40-59 39-17 69 14l130 129q107-101 244.5-156.5t284.500-55.5q156 0 298 61t245 164 164 245 61 298zM896 608v448q0 14-9 23t-23 9h-320q-14 0-23-9t-9-23v-64q0-14 9-23t23-9h224v-352q0-14 9-23t23-9h64q14 0 23 9t9 23z"/></svg><svg class="fa" viewBox="0 0 1536 1792" style="width:11.14px;height:13px;vertical-align:-2.76px;fill:#337ab7;"><path d="M1536 896q0 156-61 298t-164 245-245 164-298 61q-172 0-327-72.5t-264-204.5q-7-10-6.500-22.5t8.500-20.5l137-138q10-9 25-9 16 2 23 12 73 95 179 147t225 52q104 0 198.5-40.5t163.500-109.5 109.500-163.5 40.500-198.5-40.500-198.5-109.500-163.5-163.500-109.5-198.5-40.5q-98 0-188 35.5t-160 101.5l137 138q31 30 14 69-17 40-59 40h-448q-26 0-45-19t-19-45v-448q0-42 40-59 39-17 69 14l130 129q107-101 244.5-156.5t284.500-55.5q156 0 298 61t245 164 164 245 61 298zM896 608v448q0 14-9 23t-23 9h-320q-14 0-23-9t-9-23v-64q0-14 9-23t23-9h224v-352q0-14 9-23t23-9h64q14 0 23 9t9 23z"/></svg><svg class="fa" viewBox="0 0 1536 1792" style="width:11.14px;height:13px;vertical-align:-2.76px;fill:#5b3f9e;"><path d="M1536 896q0 156-61 298t-164 245-245 164-298 61q-172 0-327-72.5t-264-204.5q-7-10-6.500-22.5t8.500-20.5l137-138q10-9 25-9 16 2 23 12 73 95 179 147t225 52q104 0 198.5-40.5t163.500-109.5 109.500-163.5 40.500-198.5-40.500-198.5-109.500-163.5-163.500-109.5-198.5-40.5q-98 0-188 35.5t-160 101.5l137 138q31 30 14 69-17 40-59 40h-448q-26 0-45-19t-19-45v-448q0-42 40-59 39-17 69 14l130 129q107-101 244.5-156.5t284.500-55.5q156 0 298 61t245 164 164 245 61 298zM896 608v448q0 14-9 23t-23 9h-320q-14 0-23-9t-9-23v-64q0-14 9-23t23-9h224v-352q0-14 9-23t23-9h64q14 0 23 9t9 23z"/></svg><br><span class="l2"><svg class="fa" viewBox="0 0 1536 1792" style="width:11.14px;height:13px;vertical-align:-2.76px;fill:#0000ff;"><path d="M1536 896q0 156-61 298t-164 245-245 164-298 61q-172 0-327-72.5t-264-204.5q-7-10-6.500-22.5t8.500-20.5l137-138q10-9 25-9 16 2 23 12 73 95 179 147t225 52q104 0 198.5-40.5t163.500-109.5 109.500-163.5 40.500-198.5-40.500-198.5-109.500-163.5-163.500-109.5-198.5-40.5q-98 0-188 35.5t-160 101.5l137 138q31 30 14 69-17 40-59 40h-448q-26 0-45-19t-19-45v-448q0-42 40-59 39-17 69 14l130 129q107-101 244.5-156.5t284.500-55.5q156 0 298 61t245 164 164 245 61 298zM896 608v448q0 14-9 23t-23 9h-320q-14 0-23-9t-9-23v-64q0-14 9-23t23-9h224v-352q0-14 9-23t23-9h64q14 0 23 9t9 23z"/></svg><svg class="fa" viewBox="0 0 1536 1792" style="width:11.14px;height:13px;vertical-align:-2.76px;fill:#0b4f8a;"><path d="M1536 896q0 156-61 298t-164 245-245 164-298 61q-172 0-327-72.5t-264-204.5q-7-10-6.500-22.5t8.500-20.5l137-138q10-9 25-9 16 2 23 12 73 95 179 147t225 52q104 0 198.5-40.5t163.500-109.5 109.500-163.5 40.500-198.5-40.500-198.5-109.500-163.5-163.500-109.5-198.5-40.5q-98 0-188 35.5t-160 101.5l137 138q31 30 14 69-17 40-59 40h-448q-26 0-45-19t-19-45v-448q0-42 40-59 39-17 69 14l130 129q107-101 244.5-156.5t284.500-55.5q156 0 298 61t245 164 164 245 61 298zM896 608v448q0 14-9 23t-23 9h-320q-14 0-23-9t-9-23v-64q0-14 9-23t23-9h224v-352q0-14 9-23t23-9h64q14 0 23 9t9 23z"/></svg></span></td><td><div class="pg"><span style="width:39.6px;background-color:#ffa90a">7</span><span style="width:57.2px;background-color:#ba9608">10</span><span style="width:0px;background-color:#e66465">0</span></div></td><td class="c"><svg class="fa" viewBox="0 0 1408 1792" style="width:10.21px;height:13px;vertical-align:-2.76px;fill:#333;"><path d="M1152 800v64q0 14-9 23t-23 9h-352v352q0 14-9 23t-23 9h-64q-14 0-23-9t-9-23v-352h-352q-14 0-23-9t-9-23v-64q0-14 9-23t23-9h352v-352q0-14 9-23t23-9h64q14 0 23 9t9 23v352h352q14 0 23 9t9 23zM1280 1248v-832q0-66-47-113t-113-47h-832q-66 0-113 47t-47 113v832q0 66 47 113t113 47h832q66 0 113-47t47-113zM1408 416v832q0 119-84.500 203.500t-203.500 84.500h-832q-119 0-203.500-84.500t-84.500-203.500v-832q0-119 84.500-203.500t203.500-84.500h832q119 0 203.500 84.500t84.500 203.500z"/></svg></td></tr><tr class="hi"><td class="k"><span class="cb"></span></td><td><svg class="fa" viewBox="0 0 1920 1792" style="width:13.93px;height:13px;vertical-align:-2.76px;fill:#333;"><path d="M416 1280q-66 0-113-47t-47-113v-704q0-66 47-113t113-47h1088q66 0 113 47t47 113v704q0 66-47 113t-113 47h-1088zM384 416v704q0 13 9.5 22.5t22.5 9.5h1088q13 0 22.5-9.5t9.500-22.5v-704q0-13-9.500-22.5t-22.5-9.5h-1088q-13 0-22.5 9.5t-9.500 22.5zM1760 1344h160v96q0 40-47 68t-113 28h-1600q-66 0-113-28t-47-68v-96h1760zM1040 1440q16 0 16-16t-16-16h-160q-16 0-16 16t16 16h160z"/></svg>3A:C6:18:3F:CB:70</td><td>10.10.36.69</td><td>fortinet-pptp</td><td></td><td>10m ago</td><td><svg class="fa" viewBox="0 0 1792 1792" style="width:13.00px;height:13px;vertical-align:-2.76px;fill:#333;"><path d="M1664 960q-152-236-381-353 61 104 61 225 0 185-131.5 316.5t-316.5 131.5-316.5-131.5-131.5-316.5q0-121 61-225-229 117-381 353 133 205 333.5 326.5t434.5 121.5 434.5-121.5 333.5-326.5zM944 576q0-20-14-34t-34-14q-125 0-214.5 89.5t-89.5 214.5q0 20 14 34t34 14 34-14 14-34q0-86 61-147t147-61q20 0 34-14t14-34zM1792 960q0 34-20 69-140 230-376.5 368.5t-499.5 138.5-499.5-139-376.500-368q-20-35-20-69t20-69q140-229 376.5-368t499.5-139 499.5 139 376.5 368q20 35 20 69z"/></svg><svg class="fa" viewBox="128 0 1536 1792" style="width:11.14px;height:13px;vertical-align:-2.76px;fill:#d9534f;"><path d="M1639 1056q0 5-1 7-64 268-268 434.5t-478 166.5q-146 0-282.5-55t-243.5-157l-129 129q-19 19-45 19t-45-19-19-45v-448q0-26 19-45t45-19h448q26 0 45 19t19 45-19 45l-137 137q71 66 161 102t187 36q134 0 250-65t186-179q11-17 53-117 8-23 30-23h192q13 0 22.5 9.5t9.500 22.5zM1664 256v448q0 26-19 45t-45 19h-448q-26 0-45-19t-19-45 19-45l138-138q-148-137-349-137-134 0-250 65t-186 179q-11 17-53 117-8 23-30 23h-199q-13 0-22.5-9.5t-9.5-22.5v-7q65-268 270-434.5t480-166.5q146 0 284 55.5t245 156.5l130-129q19-19 45-19t45 19 19 45z"/></svg><svg class="fa" viewBox="0 0 1792 1792" style="width:13.00px;height:13px;vertical-align:-2.76px;fill:#333;"><path d="M384 1184v64q0 13-9.500 22.500t-22.500 9.500h-64q-13 0-22.500-9.500t-9.500-22.500v-64q0-13 9.500-22.500t22.500-9.500h64q13 0 22.500 9.500t9.500 22.500zM384 928v64q0 13-9.500 22.500t-22.500 9.500h-64q-13 0-22.500-9.500t-9.500-22.500v-64q0-13 9.500-22.500t22.500-9.500h64q13 0 22.500 9.500t9.500 22.500zM384 672v64q0 13-9.500 22.500t-22.500 9.500h-64q-13 0-22.500-9.500t-9.500-22.500v-64q0-13 9.500-22.500t22.500-9.500h64q13 0 22.500 9.500t9.500 22.500zM1536 1184v64q0 13-9.500 22.500t-22.500 9.500h-960q-13 0-22.500-9.500t-9.500-22.500v-64q0-13 9.500-22.500t22.500-9.500h960q13 0 22.500 9.500t9.500 22.500zM1536 928v64q0 13-9.500 22.500t-22.500 9.500h-960q-13 0-22.500-9.500t-9.500-22.500v-64q0-13 9.500-22.500t22.500-9.500h960q13 0 22.500 9.500t9.500 22.500zM1536 672v64q0 13-9.500 22.500t-22.500 9.500h-960q-13 0-22.500-9.500t-9.500-22.500v-64q0-13 9.500-22.500t22.500-9.500h960q13 0 22.500 9.500t9.500 22.500zM1664 1376v-832q0-13-9.500-22.500t-22.500-9.500h-1472q-13 0-22.500 9.500t-9.500 22.500v832q0 13 9.500 22.500t22.500 9.500h1472q13 0 22.500-9.500t9.500-22.500zM1792 288v1088q0 66-47 113t-113 47h-1472q-66 0-113-47t-47-113v-1088q0-66 47-113t113-47h1472q66 0 113 47t47 113z"/></svg>Visibility Sensor</td><td>EPT_UNKNOWN</td><td class="st"><svg class="fa" viewBox="0 0 1792 1792" style="width:13.00px;height:13px;vertical-align:-2.76px;fill:#5cb85c;"><path d="M1728 320v763q0 39-35 57-10 5-17 9-218 116-369 116-88 0-158-35l-28-14q-64-33-99-48t-91-29-114-14q-102 0-235.5 44t-228.5 102q-15 9-33 9-16 0-32-8-32-19-32-56v-742q0-35 31-55 35-21 78.500-42.5t114-52 152.500-49.5 155-19q112 0 209 31t209 86q38 19 89 19 122 0 310-112 22-12 31-17 31-16 62 2 31 20 31 55zM320 256q0 35-17.5 64t-46.5 46v1266q0 14-9 23t-23 9h-64q-14 0-23-9t-9-23v-1266q-29-17-46.5-46t-17.5-64q0-53 37.5-90.500t90.500-37.5 90.500 37.5 37.500 90.500z"/></svg><svg class="fa" viewBox="0 0 1920 1792" style="width:13.93px;height:13px;vertical-align:-2.76px;fill:#333;"><path d="M416 1280q-66 0-113-47t-47-113v-704q0-66 47-113t113-47h1088q66 0 113 47t47 113v704q0 66-47 113t-113 47h-1088zM384 416v704q0 13 9.5 22.5t22.5 9.5h1088q13 0 22.5-9.5t9.500-22.5v-704q0-13-9.500-22.5t-22.5-9.5h-1088q-13 0-22.5 9.5t-9.500 22.5zM1760 1344h160v96q0 40-47 68t-113 28h-1600q-66 0-113-28t-47-68v-96h1760zM1040 1440q16 0 16-16t-16-16h-160q-16 0-16 16t16 16h160z"/></svg><svg class="fa" viewBox="0 0 1792 1792" style="width:13.00px;height:13px;vertical-align:-2.76px;fill:#999;"><path d="M1792 1248v320q0 40-28 68t-68 28h-320q-40 0-68-28t-28-68v-320q0-40 28-68t68-28h96v-192h-512v192h96q40 0 68 28t28 68v320q0 40-28 68t-68 28h-320q-40 0-68-28t-28-68v-320q0-40 28-68t68-28h96v-192h-512v192h96q40 0 68 28t28 68v320q0 40-28 68t-68 28h-320q-40 0-68-28t-28-68v-320q0-40 28-68t68-28h96v-192q0-52 38-90t90-38h512v-192h-96q-40 0-68-28t-28-68v-320q0-40 28-68t68-28h320q40 0 68 28t28 68v320q0 40-28 68t-68 28h-96v192h512q52 0 90 38t38 90v192h96q40 0 68 28t28 68z"/></svg><svg class="fa" viewBox="0 0 1536 1792" style="width:11.14px;height:13px;vertical-align:-2.76px;fill:#000;"><path d="M1536 896q0 156-61 298t-164 245-245 164-298 61q-172 0-327-72.5t-264-204.5q-7-10-6.500-22.5t8.500-20.5l137-138q10-9 25-9 16 2 23 12 73 95 179 147t225 52q104 0 198.5-40.5t163.500-109.5 109.500-163.5 40.500-198.5-40.500-198.5-109.500-163.5-163.500-109.5-198.5-40.5q-98 0-188 35.5t-160 101.5l137 138q31 30 14 69-17 40-59 40h-448q-26 0-45-19t-19-45v-448q0-42 40-59 39-17 69 14l130 129q107-101 244.5-156.5t284.500-55.5q156 0 298 61t245 164 164 245 61 298zM896 608v448q0 14-9 23t-23 9h-320q-14 0-23-9t-9-23v-64q0-14 9-23t23-9h224v-352q0-14 9-23t23-9h64q14 0 23 9t9 23z"/></svg><svg class="fa" viewBox="0 0 1536 1792" style="width:11.14px;height:13px;vertical-align:-2.76px;fill:#337ab7;"><path d="M1536 896q0 156-61 298t-164 245-245 164-298 61q-172 0-327-72.5t-264-204.5q-7-10-6.500-22.5t8.500-20.5l137-138q10-9 25-9 16 2 23 12 73 95 179 147t225 52q104 0 198.5-40.5t163.500-109.5 109.500-163.5 40.500-198.5-40.500-198.5-109.500-163.5-163.500-109.5-198.5-40.5q-98 0-188 35.5t-160 101.5l137 138q31 30 14 69-17 40-59 40h-448q-26 0-45-19t-19-45v-448q0-42 40-59 39-17 69 14l130 129q107-101 244.5-156.5t284.500-55.5q156 0 298 61t245 164 164 245 61 298zM896 608v448q0 14-9 23t-23 9h-320q-14 0-23-9t-9-23v-64q0-14 9-23t23-9h224v-352q0-14 9-23t23-9h64q14 0 23 9t9 23z"/></svg><svg class="fa" viewBox="0 0 1536 1792" style="width:11.14px;height:13px;vertical-align:-2.76px;fill:#5b3f9e;"><path d="M1536 896q0 156-61 298t-164 245-245 164-298 61q-172 0-327-72.5t-264-204.5q-7-10-6.500-22.5t8.500-20.5l137-138q10-9 25-9 16 2 23 12 73 95 179 147t225 52q104 0 198.5-40.5t163.500-109.5 109.500-163.5 40.500-198.5-40.500-198.5-109.500-163.5-163.500-109.5-198.5-40.5q-98 0-188 35.5t-160 101.5l137 138q31 30 14 69-17 40-59 40h-448q-26 0-45-19t-19-45v-448q0-42 40-59 39-17 69 14l130 129q107-101 244.5-156.5t284.500-55.5q156 0 298 61t245 164 164 245 61 298zM896 608v448q0 14-9 23t-23 9h-320q-14 0-23-9t-9-23v-64q0-14 9-23t23-9h224v-352q0-14 9-23t23-9h64q14 0 23 9t9 23z"/></svg><br><span class="l2"><svg class="fa" viewBox="0 0 1536 1792" style="width:11.14px;height:13px;vertical-align:-2.76px;fill:#0000ff;"><path d="M1536 896q0 156-61 298t-164 245-245 164-298 61q-172 0-327-72.5t-264-204.5q-7-10-6.500-22.5t8.500-20.5l137-138q10-9 25-9 16 2 23 12 73 95 179 147t225 52q104 0 198.5-40.5t163.500-109.5 109.500-163.5 40.500-198.5-40.500-198.5-109.500-163.5-163.500-109.5-198.5-40.5q-98 0-188 35.5t-160 101.5l137 138q31 30 14 69-17 40-59 40h-448q-26 0-45-19t-19-45v-448q0-42 40-59 39-17 69 14l130 129q107-101 244.5-156.5t284.500-55.5q156 0 298 61t245 164 164 245 61 298zM896 608v448q0 14-9 23t-23 9h-320q-14 0-23-9t-9-23v-64q0-14 9-23t23-9h224v-352q0-14 9-23t23-9h64q14 0 23 9t9 23z"/></svg><svg class="fa" viewBox="0 0 1536 1792" style="width:11.14px;height:13px;vertical-align:-2.76px;fill:#0b4f8a;"><path d="M1536 896q0 156-61 298t-164 245-245 164-298 61q-172 0-327-72.5t-264-204.5q-7-10-6.500-22.5t8.500-20.5l137-138q10-9 25-9 16 2 23 12 73 95 179 147t225 52q104 0 198.5-40.5t163.500-109.5 109.500-163.5 40.500-198.5-40.500-198.5-109.500-163.5-163.500-109.5-198.5-40.5q-98 0-188 35.5t-160 101.5l137 138q31 30 14 69-17 40-59 40h-448q-26 0-45-19t-19-45v-448q0-42 40-59 39-17 69 14l130 129q107-101 244.5-156.5t284.500-55.5q156 0 298 61t245 164 164 245 61 298zM896 608v448q0 14-9 23t-23 9h-320q-14 0-23-9t-9-23v-64q0-14 9-23t23-9h224v-352q0-14 9-23t23-9h64q14 0 23 9t9 23z"/></svg></span></td><td><div class="pg"><span style="width:22.9px;background-color:#ffa90a">7</span><span style="width:69px;background-color:#ba9608">21</span><span style="width:0px;background-color:#9c3e8e">0</span><span style="width:16.1px;background-color:#e66465">5</span></div></td><td class="c"><svg class="fa" viewBox="0 0 1408 1792" style="width:10.21px;height:13px;vertical-align:-2.76px;fill:#333;"><path d="M1152 800v64q0 14-9 23t-23 9h-352v352q0 14-9 23t-23 9h-64q-14 0-23-9t-9-23v-352h-352q-14 0-23-9t-9-23v-64q0-14 9-23t23-9h352v-352q0-14 9-23t23-9h64q14 0 23 9t9 23v352h352q14 0 23 9t9 23zM1280 1248v-832q0-66-47-113t-113-47h-832q-66 0-113 47t-47 113v832q0 66 47 113t113 47h832q66 0 113-47t47-113zM1408 416v832q0 119-84.500 203.500t-203.500 84.500h-832q-119 0-203.500-84.500t-84.500-203.500v-832q0-119 84.500-203.500t203.500-84.500h832q119 0 203.500 84.500t84.500 203.500z"/></svg></td></tr><tr class="hi"><td class="k"><span class="cb"></span></td><td><svg class="fa" viewBox="0 0 1920 1792" style="width:13.93px;height:13px;vertical-align:-2.76px;fill:#333;"><path d="M416 1280q-66 0-113-47t-47-113v-704q0-66 47-113t113-47h1088q66 0 113 47t47 113v704q0 66-47 113t-113 47h-1088zM384 416v704q0 13 9.5 22.5t22.5 9.5h1088q13 0 22.5-9.5t9.500-22.5v-704q0-13-9.500-22.5t-22.5-9.5h-1088q-13 0-22.5 9.5t-9.500 22.5zM1760 1344h160v96q0 40-47 68t-113 28h-1600q-66 0-113-28t-47-68v-96h1760zM1040 1440q16 0 16-16t-16-16h-160q-16 0-16 16t16 16h160z"/></svg>C6:19:D0:71:7E:40</td><td>10.10.36.240</td><td></td><td></td><td>15m ago</td><td><svg class="fa" viewBox="0 0 1792 1792" style="width:13.00px;height:13px;vertical-align:-2.76px;fill:#333;"><path d="M1664 960q-152-236-381-353 61 104 61 225 0 185-131.5 316.5t-316.5 131.5-316.5-131.5-131.5-316.5q0-121 61-225-229 117-381 353 133 205 333.5 326.5t434.5 121.5 434.5-121.5 333.5-326.5zM944 576q0-20-14-34t-34-14q-125 0-214.5 89.5t-89.5 214.5q0 20 14 34t34 14 34-14 14-34q0-86 61-147t147-61q20 0 34-14t14-34zM1792 960q0 34-20 69-140 230-376.5 368.5t-499.5 138.5-499.5-139-376.500-368q-20-35-20-69t20-69q140-229 376.5-368t499.5-139 499.5 139 376.5 368q20 35 20 69z"/></svg><svg class="fa" viewBox="128 0 1536 1792" style="width:11.14px;height:13px;vertical-align:-2.76px;fill:#d9534f;"><path d="M1639 1056q0 5-1 7-64 268-268 434.5t-478 166.5q-146 0-282.5-55t-243.5-157l-129 129q-19 19-45 19t-45-19-19-45v-448q0-26 19-45t45-19h448q26 0 45 19t19 45-19 45l-137 137q71 66 161 102t187 36q134 0 250-65t186-179q11-17 53-117 8-23 30-23h192q13 0 22.5 9.5t9.500 22.5zM1664 256v448q0 26-19 45t-45 19h-448q-26 0-45-19t-19-45 19-45l138-138q-148-137-349-137-134 0-250 65t-186 179q-11 17-53 117-8 23-30 23h-199q-13 0-22.5-9.5t-9.5-22.5v-7q65-268 270-434.5t480-166.5q146 0 284 55.5t245 156.5l130-129q19-19 45-19t45 19 19 45z"/></svg><svg class="fa" viewBox="0 0 1792 1792" style="width:13.00px;height:13px;vertical-align:-2.76px;fill:#333;"><path d="M384 1184v64q0 13-9.500 22.500t-22.500 9.500h-64q-13 0-22.500-9.500t-9.500-22.500v-64q0-13 9.500-22.500t22.500-9.500h64q13 0 22.500 9.500t9.500 22.500zM384 928v64q0 13-9.500 22.500t-22.500 9.500h-64q-13 0-22.500-9.500t-9.500-22.500v-64q0-13 9.500-22.500t22.500-9.500h64q13 0 22.500 9.500t9.500 22.500zM384 672v64q0 13-9.500 22.500t-22.500 9.500h-64q-13 0-22.500-9.500t-9.500-22.500v-64q0-13 9.500-22.500t22.500-9.500h64q13 0 22.500 9.500t9.500 22.500zM1536 1184v64q0 13-9.500 22.500t-22.500 9.500h-960q-13 0-22.500-9.500t-9.500-22.500v-64q0-13 9.500-22.500t22.500-9.500h960q13 0 22.500 9.500t9.500 22.500zM1536 928v64q0 13-9.500 22.500t-22.500 9.500h-960q-13 0-22.500-9.500t-9.500-22.500v-64q0-13 9.500-22.500t22.500-9.500h960q13 0 22.500 9.500t9.500 22.500zM1536 672v64q0 13-9.500 22.500t-22.500 9.500h-960q-13 0-22.500-9.500t-9.500-22.500v-64q0-13 9.500-22.500t22.500-9.500h960q13 0 22.500 9.500t9.500 22.500zM1664 1376v-832q0-13-9.500-22.500t-22.500-9.500h-1472q-13 0-22.500 9.500t-9.500 22.500v832q0 13 9.500 22.500t22.500 9.500h1472q13 0 22.500-9.500t9.500-22.500zM1792 288v1088q0 66-47 113t-113 47h-1472q-66 0-113-47t-47-113v-1088q0-66 47-113t113-47h1472q66 0 113 47t47 113z"/></svg>Visibility Sensor</td><td>EPT_UNKNOWN</td><td class="st"><svg class="fa" viewBox="0 0 1792 1792" style="width:13.00px;height:13px;vertical-align:-2.76px;fill:#5cb85c;"><path d="M1728 320v763q0 39-35 57-10 5-17 9-218 116-369 116-88 0-158-35l-28-14q-64-33-99-48t-91-29-114-14q-102 0-235.5 44t-228.5 102q-15 9-33 9-16 0-32-8-32-19-32-56v-742q0-35 31-55 35-21 78.500-42.5t114-52 152.500-49.5 155-19q112 0 209 31t209 86q38 19 89 19 122 0 310-112 22-12 31-17 31-16 62 2 31 20 31 55zM320 256q0 35-17.5 64t-46.5 46v1266q0 14-9 23t-23 9h-64q-14 0-23-9t-9-23v-1266q-29-17-46.5-46t-17.5-64q0-53 37.5-90.500t90.500-37.5 90.500 37.5 37.500 90.500z"/></svg><svg class="fa" viewBox="0 0 1920 1792" style="width:13.93px;height:13px;vertical-align:-2.76px;fill:#333;"><path d="M416 1280q-66 0-113-47t-47-113v-704q0-66 47-113t113-47h1088q66 0 113 47t47 113v704q0 66-47 113t-113 47h-1088zM384 416v704q0 13 9.5 22.5t22.5 9.5h1088q13 0 22.5-9.5t9.500-22.5v-704q0-13-9.500-22.5t-22.5-9.5h-1088q-13 0-22.5 9.5t-9.500 22.5zM1760 1344h160v96q0 40-47 68t-113 28h-1600q-66 0-113-28t-47-68v-96h1760zM1040 1440q16 0 16-16t-16-16h-160q-16 0-16 16t16 16h160z"/></svg><svg class="fa" viewBox="0 0 1792 1792" style="width:13.00px;height:13px;vertical-align:-2.76px;fill:#999;"><path d="M1792 1248v320q0 40-28 68t-68 28h-320q-40 0-68-28t-28-68v-320q0-40 28-68t68-28h96v-192h-512v192h96q40 0 68 28t28 68v320q0 40-28 68t-68 28h-320q-40 0-68-28t-28-68v-320q0-40 28-68t68-28h96v-192h-512v192h96q40 0 68 28t28 68v320q0 40-28 68t-68 28h-320q-40 0-68-28t-28-68v-320q0-40 28-68t68-28h96v-192q0-52 38-90t90-38h512v-192h-96q-40 0-68-28t-28-68v-320q0-40 28-68t68-28h320q40 0 68 28t28 68v320q0 40-28 68t-68 28h-96v192h512q52 0 90 38t38 90v192h96q40 0 68 28t28 68z"/></svg><svg class="fa" viewBox="0 0 1536 1792" style="width:11.14px;height:13px;vertical-align:-2.76px;fill:#000;"><path d="M1536 896q0 156-61 298t-164 245-245 164-298 61q-172 0-327-72.5t-264-204.5q-7-10-6.500-22.5t8.500-20.5l137-138q10-9 25-9 16 2 23 12 73 95 179 147t225 52q104 0 198.5-40.5t163.500-109.5 109.500-163.5 40.500-198.5-40.500-198.5-109.500-163.5-163.500-109.5-198.5-40.5q-98 0-188 35.5t-160 101.5l137 138q31 30 14 69-17 40-59 40h-448q-26 0-45-19t-19-45v-448q0-42 40-59 39-17 69 14l130 129q107-101 244.5-156.5t284.500-55.5q156 0 298 61t245 164 164 245 61 298zM896 608v448q0 14-9 23t-23 9h-320q-14 0-23-9t-9-23v-64q0-14 9-23t23-9h224v-352q0-14 9-23t23-9h64q14 0 23 9t9 23z"/></svg><svg class="fa" viewBox="0 0 1536 1792" style="width:11.14px;height:13px;vertical-align:-2.76px;fill:#337ab7;"><path d="M1536 896q0 156-61 298t-164 245-245 164-298 61q-172 0-327-72.5t-264-204.5q-7-10-6.500-22.5t8.500-20.5l137-138q10-9 25-9 16 2 23 12 73 95 179 147t225 52q104 0 198.5-40.5t163.500-109.5 109.500-163.5 40.500-198.5-40.500-198.5-109.500-163.5-163.500-109.5-198.5-40.5q-98 0-188 35.5t-160 101.5l137 138q31 30 14 69-17 40-59 40h-448q-26 0-45-19t-19-45v-448q0-42 40-59 39-17 69 14l130 129q107-101 244.5-156.5t284.500-55.5q156 0 298 61t245 164 164 245 61 298zM896 608v448q0 14-9 23t-23 9h-320q-14 0-23-9t-9-23v-64q0-14 9-23t23-9h224v-352q0-14 9-23t23-9h64q14 0 23 9t9 23z"/></svg><svg class="fa" viewBox="0 0 1536 1792" style="width:11.14px;height:13px;vertical-align:-2.76px;fill:#5b3f9e;"><path d="M1536 896q0 156-61 298t-164 245-245 164-298 61q-172 0-327-72.5t-264-204.5q-7-10-6.500-22.5t8.500-20.5l137-138q10-9 25-9 16 2 23 12 73 95 179 147t225 52q104 0 198.5-40.5t163.500-109.5 109.500-163.5 40.500-198.5-40.500-198.5-109.500-163.5-163.500-109.5-198.5-40.5q-98 0-188 35.5t-160 101.5l137 138q31 30 14 69-17 40-59 40h-448q-26 0-45-19t-19-45v-448q0-42 40-59 39-17 69 14l130 129q107-101 244.5-156.5t284.500-55.5q156 0 298 61t245 164 164 245 61 298zM896 608v448q0 14-9 23t-23 9h-320q-14 0-23-9t-9-23v-64q0-14 9-23t23-9h224v-352q0-14 9-23t23-9h64q14 0 23 9t9 23z"/></svg><br><span class="l2"><svg class="fa" viewBox="0 0 1536 1792" style="width:11.14px;height:13px;vertical-align:-2.76px;fill:#0000ff;"><path d="M1536 896q0 156-61 298t-164 245-245 164-298 61q-172 0-327-72.5t-264-204.5q-7-10-6.500-22.5t8.500-20.5l137-138q10-9 25-9 16 2 23 12 73 95 179 147t225 52q104 0 198.5-40.5t163.500-109.5 109.500-163.5 40.500-198.5-40.500-198.5-109.500-163.5-163.500-109.5-198.5-40.5q-98 0-188 35.5t-160 101.5l137 138q31 30 14 69-17 40-59 40h-448q-26 0-45-19t-19-45v-448q0-42 40-59 39-17 69 14l130 129q107-101 244.5-156.5t284.500-55.5q156 0 298 61t245 164 164 245 61 298zM896 608v448q0 14-9 23t-23 9h-320q-14 0-23-9t-9-23v-64q0-14 9-23t23-9h224v-352q0-14 9-23t23-9h64q14 0 23 9t9 23z"/></svg><svg class="fa" viewBox="0 0 1536 1792" style="width:11.14px;height:13px;vertical-align:-2.76px;fill:#0b4f8a;"><path d="M1536 896q0 156-61 298t-164 245-245 164-298 61q-172 0-327-72.5t-264-204.5q-7-10-6.500-22.5t8.500-20.5l137-138q10-9 25-9 16 2 23 12 73 95 179 147t225 52q104 0 198.5-40.5t163.500-109.5 109.500-163.5 40.500-198.5-40.500-198.5-109.500-163.5-163.500-109.5-198.5-40.5q-98 0-188 35.5t-160 101.5l137 138q31 30 14 69-17 40-59 40h-448q-26 0-45-19t-19-45v-448q0-42 40-59 39-17 69 14l130 129q107-101 244.5-156.5t284.500-55.5q156 0 298 61t245 164 164 245 61 298zM896 608v448q0 14-9 23t-23 9h-320q-14 0-23-9t-9-23v-64q0-14 9-23t23-9h224v-352q0-14 9-23t23-9h64q14 0 23 9t9 23z"/></svg></span></td><td><div class="pg"><span style="width:31.8px;background-color:#ffa90a">6</span><span style="width:5.1px;background-color:#9c3e8e">1</span><span style="width:45.6px;background-color:#ba9608">9</span><span style="width:0px;background-color:#e66465">0</span></div></td><td class="c"><svg class="fa" viewBox="0 0 1408 1792" style="width:10.21px;height:13px;vertical-align:-2.76px;fill:#333;"><path d="M1152 800v64q0 14-9 23t-23 9h-352v352q0 14-9 23t-23 9h-64q-14 0-23-9t-9-23v-352h-352q-14 0-23-9t-9-23v-64q0-14 9-23t23-9h352v-352q0-14 9-23t23-9h64q14 0 23 9t9 23v352h352q14 0 23 9t9 23zM1280 1248v-832q0-66-47-113t-113-47h-832q-66 0-113 47t-47 113v832q0 66 47 113t113 47h832q66 0 113-47t47-113zM1408 416v832q0 119-84.500 203.500t-203.500 84.500h-832q-119 0-203.500-84.500t-84.500-203.500v-832q0-119 84.500-203.500t203.500-84.500h832q119 0 203.500 84.500t84.500 203.500z"/></svg></td></tr>
<tr><td></td><td></td><td></td><td></td><td></td><td></td><td></td><td></td><td></td><td></td><td></td></tr>
</tbody></table>
</body></html>
